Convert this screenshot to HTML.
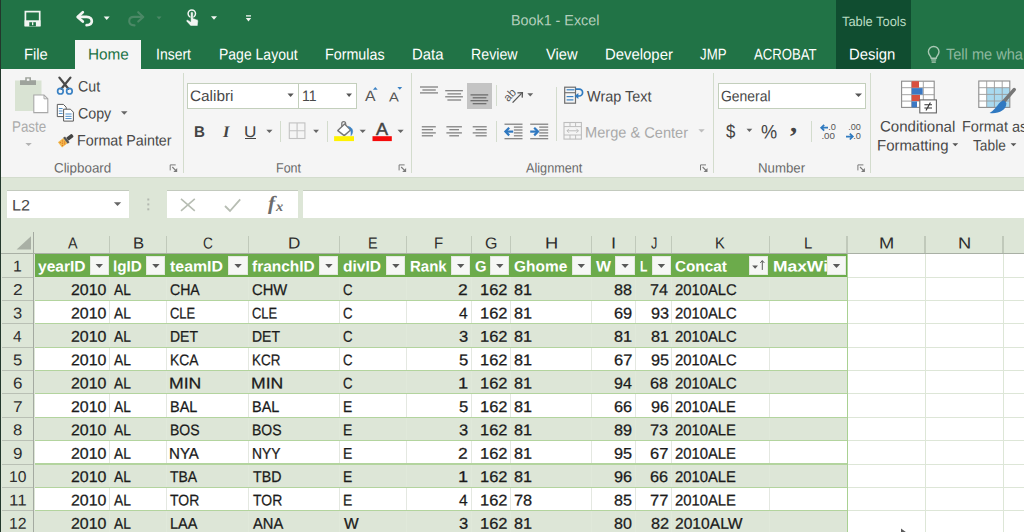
<!DOCTYPE html>
<html><head><meta charset="utf-8"><title>Book1 - Excel</title>
<style>
*{margin:0;padding:0;box-sizing:border-box}
html,body{width:1024px;height:532px;overflow:hidden;background:#fff}
body{font-family:"Liberation Sans",sans-serif;position:relative;color:#222}
.abs{position:absolute}
.t{position:absolute;white-space:nowrap;line-height:1;transform-origin:0 0}
svg{position:absolute;left:0;top:0}
</style></head><body>

<div class="abs" style="left:0px;top:0px;width:1024.00px;height:68.70px;background:#217346;"></div>
<div class="abs" style="left:835.7px;top:0px;width:75.00px;height:68.70px;background:#104d30;"></div>
<div class="abs" style="left:75.2px;top:40px;width:66.00px;height:29.00px;background:#f5f5f5;"></div>
<div class="t" style="left:510.55px;top:13px;font-size:14.8px;color:#b4cfbd;font-family:'Liberation Sans',sans-serif;transform:translateY(0.30px) scaleX(0.9686) rotate(0.03deg);">Book1 - Excel</div>
<div class="t" style="left:841.54px;top:14px;font-size:13.4px;color:#b9dcc3;font-family:'Liberation Sans',sans-serif;transform:translateY(0.90px) scaleX(0.9612) rotate(0.03deg);">Table Tools</div>
<div class="t" style="left:23.82px;top:46px;font-size:15.5px;color:#fff;font-family:'Liberation Sans',sans-serif;transform:translateY(0.60px) scaleX(0.9483) rotate(0.03deg);">File</div>
<div class="t" style="left:87.67px;top:46px;font-size:15.5px;color:#217346;font-family:'Liberation Sans',sans-serif;transform:translateY(0.60px) scaleX(0.9887) rotate(0.03deg);">Home</div>
<div class="t" style="left:155.54px;top:46px;font-size:15.5px;color:#fff;font-family:'Liberation Sans',sans-serif;transform:translateY(0.60px) scaleX(0.9013) rotate(0.03deg);">Insert</div>
<div class="t" style="left:218.78px;top:46px;font-size:15.5px;color:#fff;font-family:'Liberation Sans',sans-serif;transform:translateY(0.60px) scaleX(0.9030) rotate(0.03deg);">Page Layout</div>
<div class="t" style="left:324.86px;top:46px;font-size:15.5px;color:#fff;font-family:'Liberation Sans',sans-serif;transform:translateY(0.60px) scaleX(0.9228) rotate(0.03deg);">Formulas</div>
<div class="t" style="left:411.81px;top:46px;font-size:15.5px;color:#fff;font-family:'Liberation Sans',sans-serif;transform:translateY(0.60px) scaleX(0.9598) rotate(0.03deg);">Data</div>
<div class="t" style="left:471.17px;top:46px;font-size:15.5px;color:#fff;font-family:'Liberation Sans',sans-serif;transform:translateY(0.60px) scaleX(0.9153) rotate(0.03deg);">Review</div>
<div class="t" style="left:545.73px;top:46px;font-size:15.5px;color:#fff;font-family:'Liberation Sans',sans-serif;transform:translateY(0.60px) scaleX(0.9444) rotate(0.03deg);">View</div>
<div class="t" style="left:604.71px;top:46px;font-size:15.5px;color:#fff;font-family:'Liberation Sans',sans-serif;transform:translateY(0.60px) scaleX(0.9609) rotate(0.03deg);">Developer</div>
<div class="t" style="left:700.10px;top:46px;font-size:15.5px;color:#fff;font-family:'Liberation Sans',sans-serif;transform:translateY(0.60px) scaleX(0.8569) rotate(0.03deg);">JMP</div>
<div class="t" style="left:754.40px;top:46px;font-size:15.5px;color:#fff;font-family:'Liberation Sans',sans-serif;transform:translateY(0.60px) scaleX(0.8493) rotate(0.03deg);">ACROBAT</div>
<div class="t" style="left:848.81px;top:46px;font-size:15.5px;color:#fff;font-family:'Liberation Sans',sans-serif;transform:translateY(0.60px) scaleX(0.9601) rotate(0.03deg);">Design</div>
<div class="t" style="left:946.31px;top:46px;font-size:15.5px;color:#8fb9a0;font-family:'Liberation Sans',sans-serif;transform:translateY(0.50px) scaleX(0.9395) rotate(0.03deg);">Tell me wha</div>
<div class="abs" style="left:0px;top:68.7px;width:1024.00px;height:108.60px;background:#f5f5f5;"></div>
<div class="abs" style="left:182.6px;top:72.5px;width:1.20px;height:100.50px;background:#d3dccd;"></div>
<div class="abs" style="left:411.09999999999997px;top:72.5px;width:1.20px;height:100.50px;background:#d3dccd;"></div>
<div class="abs" style="left:712.8px;top:72.5px;width:1.20px;height:100.50px;background:#d3dccd;"></div>
<div class="abs" style="left:870.3px;top:72.5px;width:1.20px;height:100.50px;background:#d3dccd;"></div>
<div class="abs" style="left:279.7px;top:121px;width:1.00px;height:21.00px;background:#d3dccd;"></div>
<div class="abs" style="left:326.9px;top:121px;width:1.00px;height:21.00px;background:#d3dccd;"></div>
<div class="abs" style="left:496.0px;top:84.5px;width:1.00px;height:21.00px;background:#d3dccd;"></div>
<div class="abs" style="left:496.0px;top:120.6px;width:1.00px;height:21.70px;background:#d3dccd;"></div>
<div class="abs" style="left:555.6px;top:86.7px;width:1.00px;height:54.80px;background:#d3dccd;"></div>
<div class="abs" style="left:811.2px;top:120.5px;width:1.00px;height:21.50px;background:#d3dccd;"></div>
<div class="t" style="left:11.63px;top:118px;font-size:15.3px;color:#ababab;font-family:'Liberation Sans',sans-serif;transform:translateY(0.80px) scaleX(0.8750) rotate(0.03deg);">Paste</div>
<div class="t" style="left:77.69px;top:78px;font-size:15.1px;color:#484848;font-family:'Liberation Sans',sans-serif;transform:translateY(0.40px) scaleX(0.9404) rotate(0.03deg);">Cut</div>
<div class="t" style="left:77.69px;top:105px;font-size:15.1px;color:#484848;font-family:'Liberation Sans',sans-serif;transform:translateY(0.40px) scaleX(0.9419) rotate(0.03deg);">Copy</div>
<div class="t" style="left:77.26px;top:132px;font-size:15.1px;color:#484848;font-family:'Liberation Sans',sans-serif;transform:translateY(0.50px) scaleX(0.9477) rotate(0.03deg);">Format Painter</div>
<div class="t" style="left:53.83px;top:161px;font-size:13.6px;color:#6b6b6b;font-family:'Liberation Sans',sans-serif;transform:translateY(0.50px) scaleX(0.9839) rotate(0.03deg);">Clipboard</div>
<div class="t" style="left:275.50px;top:161px;font-size:13.6px;color:#6b6b6b;font-family:'Liberation Sans',sans-serif;transform:translateY(0.50px) scaleX(0.9215) rotate(0.03deg);">Font</div>
<div class="t" style="left:525.60px;top:161px;font-size:13.6px;color:#6b6b6b;font-family:'Liberation Sans',sans-serif;transform:translateY(0.50px) scaleX(0.9324) rotate(0.03deg);">Alignment</div>
<div class="t" style="left:758.44px;top:161px;font-size:13.6px;color:#6b6b6b;font-family:'Liberation Sans',sans-serif;transform:translateY(0.50px) scaleX(0.9740) rotate(0.03deg);">Number</div>
<div class="abs" style="left:187.3px;top:82.5px;width:111.50px;height:26.40px;background:#fff;border:1px solid #c3cfbc;"></div>
<div class="abs" style="left:297.8px;top:82.5px;width:58.90px;height:26.40px;background:#fff;border:1px solid #c3cfbc;"></div>
<div class="t" style="left:189.53px;top:88px;font-size:15.1px;color:#484848;font-family:'Liberation Sans',sans-serif;transform:translateY(0.10px) scaleX(1.0172) rotate(0.03deg);">Calibri</div>
<div class="t" style="left:301.64px;top:88px;font-size:15.1px;color:#484848;font-family:'Liberation Sans',sans-serif;transform:translateY(0.10px) scaleX(0.9337) rotate(0.03deg);">11</div>
<div class="abs" style="left:718.2px;top:82.5px;width:147.80px;height:26.20px;background:#fff;border:1px solid #c3cfbc;"></div>
<div class="t" style="left:721.10px;top:88px;font-size:15.1px;color:#484848;font-family:'Liberation Sans',sans-serif;transform:translateY(0.20px) scaleX(0.9241) rotate(0.03deg);">General</div>
<div class="t" style="left:586.53px;top:88px;font-size:15.1px;color:#484848;font-family:'Liberation Sans',sans-serif;transform:translateY(0.40px) scaleX(0.9584) rotate(0.03deg);">Wrap Text</div>
<div class="t" style="left:585.43px;top:124px;font-size:15.1px;color:#a9a9a9;font-family:'Liberation Sans',sans-serif;transform:translateY(0.60px) scaleX(0.9679) rotate(0.03deg);">Merge &amp; Center</div>
<div class="t" style="left:879.75px;top:118px;font-size:15.1px;color:#484848;font-family:'Liberation Sans',sans-serif;transform:translateY(0.60px) scaleX(0.9964) rotate(0.03deg);">Conditional</div>
<div class="t" style="left:876.60px;top:137px;font-size:15.1px;color:#484848;font-family:'Liberation Sans',sans-serif;transform:translateY(0.50px) scaleX(0.9905) rotate(0.03deg);">Formatting</div>
<div class="t" style="left:962.24px;top:118px;font-size:15.1px;color:#484848;font-family:'Liberation Sans',sans-serif;transform:translateY(0.60px) scaleX(0.9605) rotate(0.03deg);">Format as</div>
<div class="t" style="left:973.13px;top:137px;font-size:15.1px;color:#484848;font-family:'Liberation Sans',sans-serif;transform:translateY(0.50px) scaleX(0.9095) rotate(0.03deg);">Table</div>
<div class="abs" style="left:466.9px;top:82.6px;width:25.00px;height:26.20px;background:#c4c4c4;"></div>
<div class="t" style="left:193.72px;top:124px;font-size:15.5px;color:#444;font-family:'Liberation Sans',sans-serif;font-weight:bold;transform:translateY(0.10px) scaleX(0.9756) rotate(0.03deg);">B</div>
<div class="t" style="left:222.66px;top:124px;font-size:16px;color:#444;font-family:'Liberation Serif',serif;font-weight:bold;font-style:italic;transform:translateY(0.10px) scaleX(1.0174) rotate(0.03deg);">I</div>
<div class="t" style="left:244.21px;top:124px;font-size:15.5px;color:#444;font-family:'Liberation Sans',sans-serif;transform:translateY(0.10px) scaleX(1.1092) rotate(0.03deg);">U</div>
<div class="abs" style="left:245px;top:138.2px;width:11.00px;height:1.30px;background:#444;"></div>
<div class="t" style="left:365.00px;top:88px;font-size:15px;color:#555;font-family:'Liberation Sans',sans-serif;transform:translateY(0.10px) scaleX(1.0526) rotate(0.03deg);">A</div>
<div class="t" style="left:389.40px;top:90px;font-size:13px;color:#555;font-family:'Liberation Sans',sans-serif;transform:translateY(0.60px) scaleX(1.1336) rotate(0.03deg);">A</div>
<div class="t" style="left:376.00px;top:121px;font-size:17.6px;color:#444;font-family:'Liberation Sans',sans-serif;transform:translateY(0.10px) scaleX(1.0253) rotate(0.03deg);-webkit-text-stroke:0.5px #444;">A</div>
<div class="t" style="left:726.03px;top:121px;font-size:19px;color:#444;font-family:'Liberation Sans',sans-serif;transform:translateY(0.70px) scaleX(0.8838) rotate(0.03deg);">$</div>
<div class="t" style="left:760.66px;top:122px;font-size:19.5px;color:#444;font-family:'Liberation Sans',sans-serif;transform:translateY(0.50px) scaleX(0.9318) rotate(0.03deg);">%</div>
<div class="t" style="left:790.31px;top:109px;font-size:27px;color:#444;font-family:'Liberation Serif',serif;font-weight:bold;transform:translateY(0.70px) scaleX(1.0659) rotate(0.03deg);">,</div>
<div class="abs" style="left:0px;top:176.8px;width:1024.00px;height:77.20px;background:#dde6d7;"></div>
<div class="abs" style="left:0px;top:176.6px;width:1024.00px;height:0.80px;background:#d3dccd;"></div>
<div class="abs" style="left:6.6px;top:190.2px;width:122.40px;height:28.00px;background:#fff;border-top:1px solid #c3cabe;"></div>
<div class="abs" style="left:166.6px;top:190.2px;width:131.60px;height:28.00px;background:#fff;border-top:1px solid #c3cabe;"></div>
<div class="abs" style="left:303.2px;top:190.2px;width:720.80px;height:28.00px;background:#fff;border-top:1px solid #c3cabe;"></div>
<div class="t" style="left:12.00px;top:197px;font-size:15.2px;color:#484848;font-family:'Liberation Sans',sans-serif;transform:translateY(0.60px) scaleX(1.0674) rotate(0.03deg);">L2</div>
<div class="t" style="left:268.20px;top:192px;font-size:20px;color:#6c6c6c;font-family:'Liberation Serif',serif;font-weight:bold;font-style:italic;transform:translateY(0.70px) scaleX(1.0602) rotate(0.03deg);">f</div>
<div class="t" style="left:276.21px;top:199px;font-size:14px;color:#6c6c6c;font-family:'Liberation Serif',serif;font-weight:bold;font-style:italic;transform:translateY(0.90px) scaleX(1.0204) rotate(0.03deg);">x</div>
<div class="abs" style="left:0px;top:254px;width:34.50px;height:278.00px;background:#dde6d7;"></div>
<div class="abs" style="left:847px;top:276.5px;width:177.00px;height:1.00px;background:#dde6d7;"></div>
<div class="abs" style="left:847px;top:299.88px;width:177.00px;height:1.00px;background:#dde6d7;"></div>
<div class="abs" style="left:847px;top:323.26px;width:177.00px;height:1.00px;background:#dde6d7;"></div>
<div class="abs" style="left:847px;top:346.64px;width:177.00px;height:1.00px;background:#dde6d7;"></div>
<div class="abs" style="left:847px;top:370.02px;width:177.00px;height:1.00px;background:#dde6d7;"></div>
<div class="abs" style="left:847px;top:393.4px;width:177.00px;height:1.00px;background:#dde6d7;"></div>
<div class="abs" style="left:847px;top:416.78px;width:177.00px;height:1.00px;background:#dde6d7;"></div>
<div class="abs" style="left:847px;top:440.15999999999997px;width:177.00px;height:1.00px;background:#dde6d7;"></div>
<div class="abs" style="left:847px;top:463.53999999999996px;width:177.00px;height:1.00px;background:#dde6d7;"></div>
<div class="abs" style="left:847px;top:486.91999999999996px;width:177.00px;height:1.00px;background:#dde6d7;"></div>
<div class="abs" style="left:847px;top:510.3px;width:177.00px;height:1.00px;background:#dde6d7;"></div>
<div class="abs" style="left:847px;top:533.6800000000001px;width:177.00px;height:1.00px;background:#dde6d7;"></div>
<div class="abs" style="left:924.5px;top:254px;width:1.00px;height:278.00px;background:#dde6d7;"></div>
<div class="abs" style="left:1002.5px;top:254px;width:1.00px;height:278.00px;background:#dde6d7;"></div>
<div class="abs" style="left:34.5px;top:253.62px;width:812.50px;height:23.38px;background:#6cab4b;"></div>
<div class="abs" style="left:34.5px;top:277.0px;width:812.50px;height:23.38px;background:#dde6d7;"></div>
<div class="abs" style="left:109.3px;top:277.0px;width:1.00px;height:23.38px;background:#e0e9da;"></div>
<div class="abs" style="left:165.9px;top:277.0px;width:1.00px;height:23.38px;background:#e0e9da;"></div>
<div class="abs" style="left:248.1px;top:277.0px;width:1.00px;height:23.38px;background:#e0e9da;"></div>
<div class="abs" style="left:338.9px;top:277.0px;width:1.00px;height:23.38px;background:#e0e9da;"></div>
<div class="abs" style="left:405.9px;top:277.0px;width:1.00px;height:23.38px;background:#e0e9da;"></div>
<div class="abs" style="left:470.7px;top:277.0px;width:1.00px;height:23.38px;background:#e0e9da;"></div>
<div class="abs" style="left:509.8px;top:277.0px;width:1.00px;height:23.38px;background:#e0e9da;"></div>
<div class="abs" style="left:591.3px;top:277.0px;width:1.00px;height:23.38px;background:#e0e9da;"></div>
<div class="abs" style="left:635.1px;top:277.0px;width:1.00px;height:23.38px;background:#e0e9da;"></div>
<div class="abs" style="left:671.4px;top:277.0px;width:1.00px;height:23.38px;background:#e0e9da;"></div>
<div class="abs" style="left:768.7px;top:277.0px;width:1.00px;height:23.38px;background:#e0e9da;"></div>
<div class="abs" style="left:109.3px;top:300.38px;width:1.00px;height:23.38px;background:#e4e8e1;"></div>
<div class="abs" style="left:165.9px;top:300.38px;width:1.00px;height:23.38px;background:#e4e8e1;"></div>
<div class="abs" style="left:248.1px;top:300.38px;width:1.00px;height:23.38px;background:#e4e8e1;"></div>
<div class="abs" style="left:338.9px;top:300.38px;width:1.00px;height:23.38px;background:#e4e8e1;"></div>
<div class="abs" style="left:405.9px;top:300.38px;width:1.00px;height:23.38px;background:#e4e8e1;"></div>
<div class="abs" style="left:470.7px;top:300.38px;width:1.00px;height:23.38px;background:#e4e8e1;"></div>
<div class="abs" style="left:509.8px;top:300.38px;width:1.00px;height:23.38px;background:#e4e8e1;"></div>
<div class="abs" style="left:591.3px;top:300.38px;width:1.00px;height:23.38px;background:#e4e8e1;"></div>
<div class="abs" style="left:635.1px;top:300.38px;width:1.00px;height:23.38px;background:#e4e8e1;"></div>
<div class="abs" style="left:671.4px;top:300.38px;width:1.00px;height:23.38px;background:#e4e8e1;"></div>
<div class="abs" style="left:768.7px;top:300.38px;width:1.00px;height:23.38px;background:#e4e8e1;"></div>
<div class="abs" style="left:34.5px;top:323.76px;width:812.50px;height:23.38px;background:#dde6d7;"></div>
<div class="abs" style="left:109.3px;top:323.76px;width:1.00px;height:23.38px;background:#e0e9da;"></div>
<div class="abs" style="left:165.9px;top:323.76px;width:1.00px;height:23.38px;background:#e0e9da;"></div>
<div class="abs" style="left:248.1px;top:323.76px;width:1.00px;height:23.38px;background:#e0e9da;"></div>
<div class="abs" style="left:338.9px;top:323.76px;width:1.00px;height:23.38px;background:#e0e9da;"></div>
<div class="abs" style="left:405.9px;top:323.76px;width:1.00px;height:23.38px;background:#e0e9da;"></div>
<div class="abs" style="left:470.7px;top:323.76px;width:1.00px;height:23.38px;background:#e0e9da;"></div>
<div class="abs" style="left:509.8px;top:323.76px;width:1.00px;height:23.38px;background:#e0e9da;"></div>
<div class="abs" style="left:591.3px;top:323.76px;width:1.00px;height:23.38px;background:#e0e9da;"></div>
<div class="abs" style="left:635.1px;top:323.76px;width:1.00px;height:23.38px;background:#e0e9da;"></div>
<div class="abs" style="left:671.4px;top:323.76px;width:1.00px;height:23.38px;background:#e0e9da;"></div>
<div class="abs" style="left:768.7px;top:323.76px;width:1.00px;height:23.38px;background:#e0e9da;"></div>
<div class="abs" style="left:109.3px;top:347.14px;width:1.00px;height:23.38px;background:#e4e8e1;"></div>
<div class="abs" style="left:165.9px;top:347.14px;width:1.00px;height:23.38px;background:#e4e8e1;"></div>
<div class="abs" style="left:248.1px;top:347.14px;width:1.00px;height:23.38px;background:#e4e8e1;"></div>
<div class="abs" style="left:338.9px;top:347.14px;width:1.00px;height:23.38px;background:#e4e8e1;"></div>
<div class="abs" style="left:405.9px;top:347.14px;width:1.00px;height:23.38px;background:#e4e8e1;"></div>
<div class="abs" style="left:470.7px;top:347.14px;width:1.00px;height:23.38px;background:#e4e8e1;"></div>
<div class="abs" style="left:509.8px;top:347.14px;width:1.00px;height:23.38px;background:#e4e8e1;"></div>
<div class="abs" style="left:591.3px;top:347.14px;width:1.00px;height:23.38px;background:#e4e8e1;"></div>
<div class="abs" style="left:635.1px;top:347.14px;width:1.00px;height:23.38px;background:#e4e8e1;"></div>
<div class="abs" style="left:671.4px;top:347.14px;width:1.00px;height:23.38px;background:#e4e8e1;"></div>
<div class="abs" style="left:768.7px;top:347.14px;width:1.00px;height:23.38px;background:#e4e8e1;"></div>
<div class="abs" style="left:34.5px;top:370.52px;width:812.50px;height:23.38px;background:#dde6d7;"></div>
<div class="abs" style="left:109.3px;top:370.52px;width:1.00px;height:23.38px;background:#e0e9da;"></div>
<div class="abs" style="left:165.9px;top:370.52px;width:1.00px;height:23.38px;background:#e0e9da;"></div>
<div class="abs" style="left:248.1px;top:370.52px;width:1.00px;height:23.38px;background:#e0e9da;"></div>
<div class="abs" style="left:338.9px;top:370.52px;width:1.00px;height:23.38px;background:#e0e9da;"></div>
<div class="abs" style="left:405.9px;top:370.52px;width:1.00px;height:23.38px;background:#e0e9da;"></div>
<div class="abs" style="left:470.7px;top:370.52px;width:1.00px;height:23.38px;background:#e0e9da;"></div>
<div class="abs" style="left:509.8px;top:370.52px;width:1.00px;height:23.38px;background:#e0e9da;"></div>
<div class="abs" style="left:591.3px;top:370.52px;width:1.00px;height:23.38px;background:#e0e9da;"></div>
<div class="abs" style="left:635.1px;top:370.52px;width:1.00px;height:23.38px;background:#e0e9da;"></div>
<div class="abs" style="left:671.4px;top:370.52px;width:1.00px;height:23.38px;background:#e0e9da;"></div>
<div class="abs" style="left:768.7px;top:370.52px;width:1.00px;height:23.38px;background:#e0e9da;"></div>
<div class="abs" style="left:109.3px;top:393.9px;width:1.00px;height:23.38px;background:#e4e8e1;"></div>
<div class="abs" style="left:165.9px;top:393.9px;width:1.00px;height:23.38px;background:#e4e8e1;"></div>
<div class="abs" style="left:248.1px;top:393.9px;width:1.00px;height:23.38px;background:#e4e8e1;"></div>
<div class="abs" style="left:338.9px;top:393.9px;width:1.00px;height:23.38px;background:#e4e8e1;"></div>
<div class="abs" style="left:405.9px;top:393.9px;width:1.00px;height:23.38px;background:#e4e8e1;"></div>
<div class="abs" style="left:470.7px;top:393.9px;width:1.00px;height:23.38px;background:#e4e8e1;"></div>
<div class="abs" style="left:509.8px;top:393.9px;width:1.00px;height:23.38px;background:#e4e8e1;"></div>
<div class="abs" style="left:591.3px;top:393.9px;width:1.00px;height:23.38px;background:#e4e8e1;"></div>
<div class="abs" style="left:635.1px;top:393.9px;width:1.00px;height:23.38px;background:#e4e8e1;"></div>
<div class="abs" style="left:671.4px;top:393.9px;width:1.00px;height:23.38px;background:#e4e8e1;"></div>
<div class="abs" style="left:768.7px;top:393.9px;width:1.00px;height:23.38px;background:#e4e8e1;"></div>
<div class="abs" style="left:34.5px;top:417.28px;width:812.50px;height:23.38px;background:#dde6d7;"></div>
<div class="abs" style="left:109.3px;top:417.28px;width:1.00px;height:23.38px;background:#e0e9da;"></div>
<div class="abs" style="left:165.9px;top:417.28px;width:1.00px;height:23.38px;background:#e0e9da;"></div>
<div class="abs" style="left:248.1px;top:417.28px;width:1.00px;height:23.38px;background:#e0e9da;"></div>
<div class="abs" style="left:338.9px;top:417.28px;width:1.00px;height:23.38px;background:#e0e9da;"></div>
<div class="abs" style="left:405.9px;top:417.28px;width:1.00px;height:23.38px;background:#e0e9da;"></div>
<div class="abs" style="left:470.7px;top:417.28px;width:1.00px;height:23.38px;background:#e0e9da;"></div>
<div class="abs" style="left:509.8px;top:417.28px;width:1.00px;height:23.38px;background:#e0e9da;"></div>
<div class="abs" style="left:591.3px;top:417.28px;width:1.00px;height:23.38px;background:#e0e9da;"></div>
<div class="abs" style="left:635.1px;top:417.28px;width:1.00px;height:23.38px;background:#e0e9da;"></div>
<div class="abs" style="left:671.4px;top:417.28px;width:1.00px;height:23.38px;background:#e0e9da;"></div>
<div class="abs" style="left:768.7px;top:417.28px;width:1.00px;height:23.38px;background:#e0e9da;"></div>
<div class="abs" style="left:109.3px;top:440.65999999999997px;width:1.00px;height:23.38px;background:#e4e8e1;"></div>
<div class="abs" style="left:165.9px;top:440.65999999999997px;width:1.00px;height:23.38px;background:#e4e8e1;"></div>
<div class="abs" style="left:248.1px;top:440.65999999999997px;width:1.00px;height:23.38px;background:#e4e8e1;"></div>
<div class="abs" style="left:338.9px;top:440.65999999999997px;width:1.00px;height:23.38px;background:#e4e8e1;"></div>
<div class="abs" style="left:405.9px;top:440.65999999999997px;width:1.00px;height:23.38px;background:#e4e8e1;"></div>
<div class="abs" style="left:470.7px;top:440.65999999999997px;width:1.00px;height:23.38px;background:#e4e8e1;"></div>
<div class="abs" style="left:509.8px;top:440.65999999999997px;width:1.00px;height:23.38px;background:#e4e8e1;"></div>
<div class="abs" style="left:591.3px;top:440.65999999999997px;width:1.00px;height:23.38px;background:#e4e8e1;"></div>
<div class="abs" style="left:635.1px;top:440.65999999999997px;width:1.00px;height:23.38px;background:#e4e8e1;"></div>
<div class="abs" style="left:671.4px;top:440.65999999999997px;width:1.00px;height:23.38px;background:#e4e8e1;"></div>
<div class="abs" style="left:768.7px;top:440.65999999999997px;width:1.00px;height:23.38px;background:#e4e8e1;"></div>
<div class="abs" style="left:34.5px;top:464.03999999999996px;width:812.50px;height:23.38px;background:#dde6d7;"></div>
<div class="abs" style="left:109.3px;top:464.03999999999996px;width:1.00px;height:23.38px;background:#e0e9da;"></div>
<div class="abs" style="left:165.9px;top:464.03999999999996px;width:1.00px;height:23.38px;background:#e0e9da;"></div>
<div class="abs" style="left:248.1px;top:464.03999999999996px;width:1.00px;height:23.38px;background:#e0e9da;"></div>
<div class="abs" style="left:338.9px;top:464.03999999999996px;width:1.00px;height:23.38px;background:#e0e9da;"></div>
<div class="abs" style="left:405.9px;top:464.03999999999996px;width:1.00px;height:23.38px;background:#e0e9da;"></div>
<div class="abs" style="left:470.7px;top:464.03999999999996px;width:1.00px;height:23.38px;background:#e0e9da;"></div>
<div class="abs" style="left:509.8px;top:464.03999999999996px;width:1.00px;height:23.38px;background:#e0e9da;"></div>
<div class="abs" style="left:591.3px;top:464.03999999999996px;width:1.00px;height:23.38px;background:#e0e9da;"></div>
<div class="abs" style="left:635.1px;top:464.03999999999996px;width:1.00px;height:23.38px;background:#e0e9da;"></div>
<div class="abs" style="left:671.4px;top:464.03999999999996px;width:1.00px;height:23.38px;background:#e0e9da;"></div>
<div class="abs" style="left:768.7px;top:464.03999999999996px;width:1.00px;height:23.38px;background:#e0e9da;"></div>
<div class="abs" style="left:109.3px;top:487.41999999999996px;width:1.00px;height:23.38px;background:#e4e8e1;"></div>
<div class="abs" style="left:165.9px;top:487.41999999999996px;width:1.00px;height:23.38px;background:#e4e8e1;"></div>
<div class="abs" style="left:248.1px;top:487.41999999999996px;width:1.00px;height:23.38px;background:#e4e8e1;"></div>
<div class="abs" style="left:338.9px;top:487.41999999999996px;width:1.00px;height:23.38px;background:#e4e8e1;"></div>
<div class="abs" style="left:405.9px;top:487.41999999999996px;width:1.00px;height:23.38px;background:#e4e8e1;"></div>
<div class="abs" style="left:470.7px;top:487.41999999999996px;width:1.00px;height:23.38px;background:#e4e8e1;"></div>
<div class="abs" style="left:509.8px;top:487.41999999999996px;width:1.00px;height:23.38px;background:#e4e8e1;"></div>
<div class="abs" style="left:591.3px;top:487.41999999999996px;width:1.00px;height:23.38px;background:#e4e8e1;"></div>
<div class="abs" style="left:635.1px;top:487.41999999999996px;width:1.00px;height:23.38px;background:#e4e8e1;"></div>
<div class="abs" style="left:671.4px;top:487.41999999999996px;width:1.00px;height:23.38px;background:#e4e8e1;"></div>
<div class="abs" style="left:768.7px;top:487.41999999999996px;width:1.00px;height:23.38px;background:#e4e8e1;"></div>
<div class="abs" style="left:34.5px;top:510.8px;width:812.50px;height:23.38px;background:#dde6d7;"></div>
<div class="abs" style="left:109.3px;top:510.8px;width:1.00px;height:23.38px;background:#e0e9da;"></div>
<div class="abs" style="left:165.9px;top:510.8px;width:1.00px;height:23.38px;background:#e0e9da;"></div>
<div class="abs" style="left:248.1px;top:510.8px;width:1.00px;height:23.38px;background:#e0e9da;"></div>
<div class="abs" style="left:338.9px;top:510.8px;width:1.00px;height:23.38px;background:#e0e9da;"></div>
<div class="abs" style="left:405.9px;top:510.8px;width:1.00px;height:23.38px;background:#e0e9da;"></div>
<div class="abs" style="left:470.7px;top:510.8px;width:1.00px;height:23.38px;background:#e0e9da;"></div>
<div class="abs" style="left:509.8px;top:510.8px;width:1.00px;height:23.38px;background:#e0e9da;"></div>
<div class="abs" style="left:591.3px;top:510.8px;width:1.00px;height:23.38px;background:#e0e9da;"></div>
<div class="abs" style="left:635.1px;top:510.8px;width:1.00px;height:23.38px;background:#e0e9da;"></div>
<div class="abs" style="left:671.4px;top:510.8px;width:1.00px;height:23.38px;background:#e0e9da;"></div>
<div class="abs" style="left:768.7px;top:510.8px;width:1.00px;height:23.38px;background:#e0e9da;"></div>
<div class="abs" style="left:34.5px;top:299.78px;width:813.00px;height:1.20px;background:#b3d49e;"></div>
<div class="abs" style="left:34.5px;top:323.15999999999997px;width:813.00px;height:1.20px;background:#b3d49e;"></div>
<div class="abs" style="left:34.5px;top:346.53999999999996px;width:813.00px;height:1.20px;background:#b3d49e;"></div>
<div class="abs" style="left:34.5px;top:369.91999999999996px;width:813.00px;height:1.20px;background:#b3d49e;"></div>
<div class="abs" style="left:34.5px;top:393.29999999999995px;width:813.00px;height:1.20px;background:#b3d49e;"></div>
<div class="abs" style="left:34.5px;top:416.67999999999995px;width:813.00px;height:1.20px;background:#b3d49e;"></div>
<div class="abs" style="left:34.5px;top:440.05999999999995px;width:813.00px;height:1.20px;background:#b3d49e;"></div>
<div class="abs" style="left:34.5px;top:463.43999999999994px;width:813.00px;height:1.20px;background:#b3d49e;"></div>
<div class="abs" style="left:34.5px;top:486.81999999999994px;width:813.00px;height:1.20px;background:#b3d49e;"></div>
<div class="abs" style="left:34.5px;top:510.2px;width:813.00px;height:1.20px;background:#b3d49e;"></div>
<div class="abs" style="left:34.5px;top:533.58px;width:813.00px;height:1.20px;background:#b3d49e;"></div>
<div class="abs" style="left:846.5px;top:253.62px;width:1.10px;height:278.38px;background:#a9d192;"></div>
<div class="abs" style="left:2px;top:276.5px;width:32.00px;height:1.00px;background:#b9c0b4;"></div>
<div class="abs" style="left:2px;top:299.88px;width:32.00px;height:1.00px;background:#b9c0b4;"></div>
<div class="abs" style="left:2px;top:323.26px;width:32.00px;height:1.00px;background:#b9c0b4;"></div>
<div class="abs" style="left:2px;top:346.64px;width:32.00px;height:1.00px;background:#b9c0b4;"></div>
<div class="abs" style="left:2px;top:370.02px;width:32.00px;height:1.00px;background:#b9c0b4;"></div>
<div class="abs" style="left:2px;top:393.4px;width:32.00px;height:1.00px;background:#b9c0b4;"></div>
<div class="abs" style="left:2px;top:416.78px;width:32.00px;height:1.00px;background:#b9c0b4;"></div>
<div class="abs" style="left:2px;top:440.15999999999997px;width:32.00px;height:1.00px;background:#b9c0b4;"></div>
<div class="abs" style="left:2px;top:463.53999999999996px;width:32.00px;height:1.00px;background:#b9c0b4;"></div>
<div class="abs" style="left:2px;top:486.91999999999996px;width:32.00px;height:1.00px;background:#b9c0b4;"></div>
<div class="abs" style="left:2px;top:510.3px;width:32.00px;height:1.00px;background:#b9c0b4;"></div>
<div class="abs" style="left:2px;top:533.6800000000001px;width:32.00px;height:1.00px;background:#b9c0b4;"></div>
<div class="abs" style="left:33.1px;top:232px;width:1.20px;height:300.00px;background:#a4aaa1;"></div>
<div class="abs" style="left:0px;top:252.7px;width:1024.00px;height:1.20px;background:#a9b0a5;"></div>
<div class="abs" style="left:109.2px;top:236px;width:1.20px;height:16.70px;background:#c0c9ba;"></div>
<div class="abs" style="left:165.8px;top:236px;width:1.20px;height:16.70px;background:#c0c9ba;"></div>
<div class="abs" style="left:248.0px;top:236px;width:1.20px;height:16.70px;background:#c0c9ba;"></div>
<div class="abs" style="left:338.79999999999995px;top:236px;width:1.20px;height:16.70px;background:#c0c9ba;"></div>
<div class="abs" style="left:405.79999999999995px;top:236px;width:1.20px;height:16.70px;background:#c0c9ba;"></div>
<div class="abs" style="left:470.59999999999997px;top:236px;width:1.20px;height:16.70px;background:#c0c9ba;"></div>
<div class="abs" style="left:509.7px;top:236px;width:1.20px;height:16.70px;background:#c0c9ba;"></div>
<div class="abs" style="left:591.1999999999999px;top:236px;width:1.20px;height:16.70px;background:#c0c9ba;"></div>
<div class="abs" style="left:635.0px;top:236px;width:1.20px;height:16.70px;background:#c0c9ba;"></div>
<div class="abs" style="left:671.3px;top:236px;width:1.20px;height:16.70px;background:#c0c9ba;"></div>
<div class="abs" style="left:768.6px;top:236px;width:1.20px;height:16.70px;background:#c0c9ba;"></div>
<div class="abs" style="left:846.4px;top:236px;width:1.20px;height:16.70px;background:#c0c9ba;"></div>
<div class="abs" style="left:924.4px;top:236px;width:1.20px;height:16.70px;background:#c0c9ba;"></div>
<div class="abs" style="left:1002.4px;top:236px;width:1.20px;height:16.70px;background:#c0c9ba;"></div>
<div class="t" style="left:67.58px;top:235px;font-size:15.9px;color:#2e2e2e;font-family:'Liberation Sans',sans-serif;transform:translateY(0.50px) scaleX(0.9020) rotate(0.03deg);">A</div>
<div class="t" style="left:132.52px;top:235px;font-size:15.9px;color:#2e2e2e;font-family:'Liberation Sans',sans-serif;transform:translateY(0.50px) scaleX(1.0464) rotate(0.03deg);">B</div>
<div class="t" style="left:202.66px;top:235px;font-size:15.9px;color:#2e2e2e;font-family:'Liberation Sans',sans-serif;transform:translateY(0.50px) scaleX(0.8617) rotate(0.03deg);">C</div>
<div class="t" style="left:287.73px;top:235px;font-size:15.9px;color:#2e2e2e;font-family:'Liberation Sans',sans-serif;transform:translateY(0.50px) scaleX(1.0774) rotate(0.03deg);">D</div>
<div class="t" style="left:368.00px;top:235px;font-size:15.9px;color:#2e2e2e;font-family:'Liberation Sans',sans-serif;transform:translateY(0.50px) scaleX(0.9095) rotate(0.03deg);">E</div>
<div class="t" style="left:434.12px;top:235px;font-size:15.9px;color:#2e2e2e;font-family:'Liberation Sans',sans-serif;transform:translateY(0.50px) scaleX(0.9439) rotate(0.03deg);">F</div>
<div class="t" style="left:484.91px;top:235px;font-size:15.9px;color:#2e2e2e;font-family:'Liberation Sans',sans-serif;transform:translateY(0.50px) scaleX(1.0067) rotate(0.03deg);">G</div>
<div class="t" style="left:544.67px;top:235px;font-size:15.9px;color:#2e2e2e;font-family:'Liberation Sans',sans-serif;transform:translateY(0.50px) scaleX(1.1500) rotate(0.03deg);">H</div>
<div class="t" style="left:611.39px;top:235px;font-size:15.9px;color:#2e2e2e;font-family:'Liberation Sans',sans-serif;transform:translateY(0.50px) scaleX(1.1500) rotate(0.03deg);">I</div>
<div class="t" style="left:651.15px;top:235px;font-size:15.9px;color:#2e2e2e;font-family:'Liberation Sans',sans-serif;transform:translateY(0.50px) scaleX(0.8000) rotate(0.03deg);">J</div>
<div class="t" style="left:715.34px;top:235px;font-size:15.9px;color:#2e2e2e;font-family:'Liberation Sans',sans-serif;transform:translateY(0.50px) scaleX(0.9258) rotate(0.03deg);">K</div>
<div class="t" style="left:803.78px;top:235px;font-size:15.9px;color:#2e2e2e;font-family:'Liberation Sans',sans-serif;transform:translateY(0.50px) scaleX(0.9390) rotate(0.03deg);">L</div>
<div class="t" style="left:878.61px;top:235px;font-size:15.9px;color:#2e2e2e;font-family:'Liberation Sans',sans-serif;transform:translateY(0.50px) scaleX(1.1500) rotate(0.03deg);">M</div>
<div class="t" style="left:957.62px;top:235px;font-size:15.9px;color:#2e2e2e;font-family:'Liberation Sans',sans-serif;transform:translateY(0.50px) scaleX(1.1500) rotate(0.03deg);">N</div>
<div class="t" style="left:1035.95px;top:235px;font-size:15.9px;color:#2e2e2e;font-family:'Liberation Sans',sans-serif;transform:translateY(0.50px) scaleX(1.0144) rotate(0.03deg);">O</div>
<div class="t" style="left:12.95px;top:258px;font-size:15.7px;color:#2e2e2e;font-family:'Liberation Sans',sans-serif;transform:translateY(0.62px) scaleX(1.0133) rotate(0.03deg);">1</div>
<div class="t" style="left:12.77px;top:282px;font-size:15.7px;color:#2e2e2e;font-family:'Liberation Sans',sans-serif;transform:translateY(0.00px) scaleX(1.1088) rotate(0.03deg);">2</div>
<div class="t" style="left:13.06px;top:305px;font-size:15.7px;color:#2e2e2e;font-family:'Liberation Sans',sans-serif;transform:translateY(0.38px) scaleX(1.0510) rotate(0.03deg);">3</div>
<div class="t" style="left:13.33px;top:328px;font-size:15.7px;color:#2e2e2e;font-family:'Liberation Sans',sans-serif;transform:translateY(0.76px) scaleX(0.9892) rotate(0.03deg);">4</div>
<div class="t" style="left:12.97px;top:352px;font-size:15.7px;color:#2e2e2e;font-family:'Liberation Sans',sans-serif;transform:translateY(0.14px) scaleX(1.0621) rotate(0.03deg);">5</div>
<div class="t" style="left:12.79px;top:375px;font-size:15.7px;color:#2e2e2e;font-family:'Liberation Sans',sans-serif;transform:translateY(0.52px) scaleX(1.0849) rotate(0.03deg);">6</div>
<div class="t" style="left:12.77px;top:398px;font-size:15.7px;color:#2e2e2e;font-family:'Liberation Sans',sans-serif;transform:translateY(0.90px) scaleX(1.1088) rotate(0.03deg);">7</div>
<div class="t" style="left:12.97px;top:422px;font-size:15.7px;color:#2e2e2e;font-family:'Liberation Sans',sans-serif;transform:translateY(0.28px) scaleX(1.0621) rotate(0.03deg);">8</div>
<div class="t" style="left:12.87px;top:445px;font-size:15.7px;color:#2e2e2e;font-family:'Liberation Sans',sans-serif;transform:translateY(0.66px) scaleX(1.0849) rotate(0.03deg);">9</div>
<div class="t" style="left:8.61px;top:469px;font-size:15.7px;color:#2e2e2e;font-family:'Liberation Sans',sans-serif;transform:translateY(0.04px) scaleX(0.9962) rotate(0.03deg);">10</div>
<div class="t" style="left:8.50px;top:492px;font-size:15.7px;color:#2e2e2e;font-family:'Liberation Sans',sans-serif;transform:translateY(0.42px) scaleX(1.0888) rotate(0.03deg);">11</div>
<div class="t" style="left:8.59px;top:515px;font-size:15.7px;color:#2e2e2e;font-family:'Liberation Sans',sans-serif;transform:translateY(0.80px) scaleX(1.0114) rotate(0.03deg);">12</div>
<div class="t" style="left:37.72px;top:258px;font-size:15.2px;color:#fff;font-family:'Liberation Sans',sans-serif;font-weight:bold;transform:translateY(0.52px) scaleX(1.0251) rotate(0.03deg);">yearID</div>
<div class="abs" style="left:89.6px;top:255.82px;width:19.30px;height:19.00px;background:#f6f7f5;border:1px solid #e3e9df;"></div>
<div class="t" style="left:112.73px;top:258px;font-size:15.2px;color:#fff;font-family:'Liberation Sans',sans-serif;font-weight:bold;transform:translateY(0.52px) scaleX(1.0044) rotate(0.03deg);">lgID</div>
<div class="abs" style="left:146.20000000000002px;top:255.82px;width:19.30px;height:19.00px;background:#f6f7f5;border:1px solid #e3e9df;"></div>
<div class="t" style="left:170.44px;top:258px;font-size:15.2px;color:#fff;font-family:'Liberation Sans',sans-serif;font-weight:bold;transform:translateY(0.52px) scaleX(1.0470) rotate(0.03deg);">teamID</div>
<div class="abs" style="left:228.4px;top:255.82px;width:19.30px;height:19.00px;background:#f6f7f5;border:1px solid #e3e9df;"></div>
<div class="t" style="left:252.27px;top:258px;font-size:15.2px;color:#fff;font-family:'Liberation Sans',sans-serif;font-weight:bold;transform:translateY(0.52px) scaleX(1.0181) rotate(0.03deg);">franchID</div>
<div class="abs" style="left:319.2px;top:255.82px;width:19.30px;height:19.00px;background:#f6f7f5;border:1px solid #e3e9df;"></div>
<div class="t" style="left:343.48px;top:258px;font-size:15.2px;color:#fff;font-family:'Liberation Sans',sans-serif;font-weight:bold;transform:translateY(0.52px) scaleX(1.0237) rotate(0.03deg);">divID</div>
<div class="abs" style="left:386.2px;top:255.82px;width:19.30px;height:19.00px;background:#f6f7f5;border:1px solid #e3e9df;"></div>
<div class="t" style="left:409.62px;top:258px;font-size:15.2px;color:#fff;font-family:'Liberation Sans',sans-serif;font-weight:bold;transform:translateY(0.52px) scaleX(0.9868) rotate(0.03deg);">Rank</div>
<div class="abs" style="left:451.0px;top:255.82px;width:19.30px;height:19.00px;background:#f6f7f5;border:1px solid #e3e9df;"></div>
<div class="t" style="left:474.71px;top:258px;font-size:15.2px;color:#fff;font-family:'Liberation Sans',sans-serif;font-weight:bold;transform:translateY(0.52px) scaleX(0.9747) rotate(0.03deg);">G</div>
<div class="abs" style="left:490.1px;top:255.82px;width:19.30px;height:19.00px;background:#f6f7f5;border:1px solid #e3e9df;"></div>
<div class="t" style="left:513.78px;top:258px;font-size:15.2px;color:#fff;font-family:'Liberation Sans',sans-serif;font-weight:bold;transform:translateY(0.52px) scaleX(1.0175) rotate(0.03deg);">Ghome</div>
<div class="abs" style="left:571.5999999999999px;top:255.82px;width:19.30px;height:19.00px;background:#f6f7f5;border:1px solid #e3e9df;"></div>
<div class="t" style="left:595.60px;top:258px;font-size:15.2px;color:#fff;font-family:'Liberation Sans',sans-serif;font-weight:bold;transform:translateY(0.52px) scaleX(1.0443) rotate(0.03deg);">W</div>
<div class="abs" style="left:615.4px;top:255.82px;width:19.30px;height:19.00px;background:#f6f7f5;border:1px solid #e3e9df;"></div>
<div class="t" style="left:639.88px;top:258px;font-size:15.2px;color:#fff;font-family:'Liberation Sans',sans-serif;font-weight:bold;transform:translateY(0.52px) scaleX(0.8000) rotate(0.03deg);">L</div>
<div class="abs" style="left:651.6999999999999px;top:255.82px;width:19.30px;height:19.00px;background:#f6f7f5;border:1px solid #e3e9df;"></div>
<div class="t" style="left:675.39px;top:258px;font-size:15.2px;color:#fff;font-family:'Liberation Sans',sans-serif;font-weight:bold;transform:translateY(0.52px) scaleX(1.0061) rotate(0.03deg);">Concat</div>
<div class="abs" style="left:749.0px;top:255.82px;width:19.30px;height:19.00px;background:#f6f7f5;border:1px solid #e3e9df;"></div>
<div class="t" style="left:772.67px;top:258px;font-size:15.2px;color:#fff;font-family:'Liberation Sans',sans-serif;font-weight:bold;transform:translateY(0.52px) scaleX(1.1462) rotate(0.03deg);">MaxWi</div>
<div class="abs" style="left:826.8px;top:255.82px;width:19.30px;height:19.00px;background:#f6f7f5;border:1px solid #e3e9df;"></div>
<div class="t" style="left:70.92px;top:282px;font-size:15.5px;color:#1a1a1a;font-family:'Liberation Sans',sans-serif;transform:translateY(0.00px) scaleX(1.0275) rotate(0.03deg);-webkit-text-stroke:0.25px #1a1a1a;">2010</div>
<div class="t" style="left:114.10px;top:282px;font-size:15.5px;color:#1a1a1a;font-family:'Liberation Sans',sans-serif;transform:translateY(0.00px) scaleX(0.8882) rotate(0.03deg);-webkit-text-stroke:0.25px #1a1a1a;">AL</div>
<div class="t" style="left:170.00px;top:282px;font-size:15.5px;color:#1a1a1a;font-family:'Liberation Sans',sans-serif;transform:translateY(0.00px) scaleX(0.9096) rotate(0.03deg);-webkit-text-stroke:0.25px #1a1a1a;">CHA</div>
<div class="t" style="left:252.16px;top:282px;font-size:15.5px;color:#1a1a1a;font-family:'Liberation Sans',sans-serif;transform:translateY(0.00px) scaleX(0.9502) rotate(0.03deg);-webkit-text-stroke:0.25px #1a1a1a;">CHW</div>
<div class="t" style="left:343.04px;top:282px;font-size:15.5px;color:#1a1a1a;font-family:'Liberation Sans',sans-serif;transform:translateY(0.00px) scaleX(0.8501) rotate(0.03deg);-webkit-text-stroke:0.25px #1a1a1a;">C</div>
<div class="t" style="left:458.41px;top:282px;font-size:15.5px;color:#1a1a1a;font-family:'Liberation Sans',sans-serif;transform:translateY(0.00px) scaleX(1.1231) rotate(0.03deg);-webkit-text-stroke:0.25px #1a1a1a;">2</div>
<div class="t" style="left:479.70px;top:282px;font-size:15.5px;color:#1a1a1a;font-family:'Liberation Sans',sans-serif;transform:translateY(0.00px) scaleX(1.0625) rotate(0.03deg);-webkit-text-stroke:0.25px #1a1a1a;">162</div>
<div class="t" style="left:513.95px;top:282px;font-size:15.5px;color:#1a1a1a;font-family:'Liberation Sans',sans-serif;transform:translateY(0.00px) scaleX(1.0474) rotate(0.03deg);-webkit-text-stroke:0.25px #1a1a1a;">81</div>
<div class="t" style="left:614.31px;top:282px;font-size:15.5px;color:#1a1a1a;font-family:'Liberation Sans',sans-serif;transform:translateY(0.00px) scaleX(1.0423) rotate(0.03deg);-webkit-text-stroke:0.25px #1a1a1a;">88</div>
<div class="t" style="left:650.46px;top:282px;font-size:15.5px;color:#1a1a1a;font-family:'Liberation Sans',sans-serif;transform:translateY(0.00px) scaleX(1.0373) rotate(0.03deg);-webkit-text-stroke:0.25px #1a1a1a;">74</div>
<div class="t" style="left:675.46px;top:282px;font-size:15.5px;color:#1a1a1a;font-family:'Liberation Sans',sans-serif;transform:translateY(0.00px) scaleX(0.9544) rotate(0.03deg);-webkit-text-stroke:0.25px #1a1a1a;">2010ALC</div>
<div class="t" style="left:70.92px;top:305px;font-size:15.5px;color:#1a1a1a;font-family:'Liberation Sans',sans-serif;transform:translateY(0.38px) scaleX(1.0275) rotate(0.03deg);-webkit-text-stroke:0.25px #1a1a1a;">2010</div>
<div class="t" style="left:114.10px;top:305px;font-size:15.5px;color:#1a1a1a;font-family:'Liberation Sans',sans-serif;transform:translateY(0.38px) scaleX(0.8882) rotate(0.03deg);-webkit-text-stroke:0.25px #1a1a1a;">AL</div>
<div class="t" style="left:170.05px;top:305px;font-size:15.5px;color:#1a1a1a;font-family:'Liberation Sans',sans-serif;transform:translateY(0.38px) scaleX(0.8342) rotate(0.03deg);-webkit-text-stroke:0.25px #1a1a1a;">CLE</div>
<div class="t" style="left:252.25px;top:305px;font-size:15.5px;color:#1a1a1a;font-family:'Liberation Sans',sans-serif;transform:translateY(0.38px) scaleX(0.8342) rotate(0.03deg);-webkit-text-stroke:0.25px #1a1a1a;">CLE</div>
<div class="t" style="left:343.04px;top:305px;font-size:15.5px;color:#1a1a1a;font-family:'Liberation Sans',sans-serif;transform:translateY(0.38px) scaleX(0.8501) rotate(0.03deg);-webkit-text-stroke:0.25px #1a1a1a;">C</div>
<div class="t" style="left:458.97px;top:305px;font-size:15.5px;color:#1a1a1a;font-family:'Liberation Sans',sans-serif;transform:translateY(0.38px) scaleX(1.0019) rotate(0.03deg);-webkit-text-stroke:0.25px #1a1a1a;">4</div>
<div class="t" style="left:479.70px;top:305px;font-size:15.5px;color:#1a1a1a;font-family:'Liberation Sans',sans-serif;transform:translateY(0.38px) scaleX(1.0625) rotate(0.03deg);-webkit-text-stroke:0.25px #1a1a1a;">162</div>
<div class="t" style="left:513.95px;top:305px;font-size:15.5px;color:#1a1a1a;font-family:'Liberation Sans',sans-serif;transform:translateY(0.38px) scaleX(1.0474) rotate(0.03deg);-webkit-text-stroke:0.25px #1a1a1a;">81</div>
<div class="t" style="left:614.14px;top:305px;font-size:15.5px;color:#1a1a1a;font-family:'Liberation Sans',sans-serif;transform:translateY(0.38px) scaleX(1.0577) rotate(0.03deg);-webkit-text-stroke:0.25px #1a1a1a;">69</div>
<div class="t" style="left:650.53px;top:305px;font-size:15.5px;color:#1a1a1a;font-family:'Liberation Sans',sans-serif;transform:translateY(0.38px) scaleX(1.0474) rotate(0.03deg);-webkit-text-stroke:0.25px #1a1a1a;">93</div>
<div class="t" style="left:675.46px;top:305px;font-size:15.5px;color:#1a1a1a;font-family:'Liberation Sans',sans-serif;transform:translateY(0.38px) scaleX(0.9544) rotate(0.03deg);-webkit-text-stroke:0.25px #1a1a1a;">2010ALC</div>
<div class="t" style="left:70.92px;top:328px;font-size:15.5px;color:#1a1a1a;font-family:'Liberation Sans',sans-serif;transform:translateY(0.76px) scaleX(1.0275) rotate(0.03deg);-webkit-text-stroke:0.25px #1a1a1a;">2010</div>
<div class="t" style="left:114.10px;top:328px;font-size:15.5px;color:#1a1a1a;font-family:'Liberation Sans',sans-serif;transform:translateY(0.76px) scaleX(0.8882) rotate(0.03deg);-webkit-text-stroke:0.25px #1a1a1a;">AL</div>
<div class="t" style="left:169.58px;top:328px;font-size:15.5px;color:#1a1a1a;font-family:'Liberation Sans',sans-serif;transform:translateY(0.76px) scaleX(0.9015) rotate(0.03deg);-webkit-text-stroke:0.25px #1a1a1a;">DET</div>
<div class="t" style="left:251.78px;top:328px;font-size:15.5px;color:#1a1a1a;font-family:'Liberation Sans',sans-serif;transform:translateY(0.76px) scaleX(0.9015) rotate(0.03deg);-webkit-text-stroke:0.25px #1a1a1a;">DET</div>
<div class="t" style="left:343.04px;top:328px;font-size:15.5px;color:#1a1a1a;font-family:'Liberation Sans',sans-serif;transform:translateY(0.76px) scaleX(0.8501) rotate(0.03deg);-webkit-text-stroke:0.25px #1a1a1a;">C</div>
<div class="t" style="left:458.70px;top:328px;font-size:15.5px;color:#1a1a1a;font-family:'Liberation Sans',sans-serif;transform:translateY(0.76px) scaleX(1.0646) rotate(0.03deg);-webkit-text-stroke:0.25px #1a1a1a;">3</div>
<div class="t" style="left:479.70px;top:328px;font-size:15.5px;color:#1a1a1a;font-family:'Liberation Sans',sans-serif;transform:translateY(0.76px) scaleX(1.0625) rotate(0.03deg);-webkit-text-stroke:0.25px #1a1a1a;">162</div>
<div class="t" style="left:513.95px;top:328px;font-size:15.5px;color:#1a1a1a;font-family:'Liberation Sans',sans-serif;transform:translateY(0.76px) scaleX(1.0474) rotate(0.03deg);-webkit-text-stroke:0.25px #1a1a1a;">81</div>
<div class="t" style="left:614.31px;top:328px;font-size:15.5px;color:#1a1a1a;font-family:'Liberation Sans',sans-serif;transform:translateY(0.76px) scaleX(1.0474) rotate(0.03deg);-webkit-text-stroke:0.25px #1a1a1a;">81</div>
<div class="t" style="left:650.61px;top:328px;font-size:15.5px;color:#1a1a1a;font-family:'Liberation Sans',sans-serif;transform:translateY(0.76px) scaleX(1.0474) rotate(0.03deg);-webkit-text-stroke:0.25px #1a1a1a;">81</div>
<div class="t" style="left:675.46px;top:328px;font-size:15.5px;color:#1a1a1a;font-family:'Liberation Sans',sans-serif;transform:translateY(0.76px) scaleX(0.9544) rotate(0.03deg);-webkit-text-stroke:0.25px #1a1a1a;">2010ALC</div>
<div class="t" style="left:70.92px;top:352px;font-size:15.5px;color:#1a1a1a;font-family:'Liberation Sans',sans-serif;transform:translateY(0.14px) scaleX(1.0275) rotate(0.03deg);-webkit-text-stroke:0.25px #1a1a1a;">2010</div>
<div class="t" style="left:114.10px;top:352px;font-size:15.5px;color:#1a1a1a;font-family:'Liberation Sans',sans-serif;transform:translateY(0.14px) scaleX(0.8882) rotate(0.03deg);-webkit-text-stroke:0.25px #1a1a1a;">AL</div>
<div class="t" style="left:169.60px;top:352px;font-size:15.5px;color:#1a1a1a;font-family:'Liberation Sans',sans-serif;transform:translateY(0.14px) scaleX(0.8908) rotate(0.03deg);-webkit-text-stroke:0.25px #1a1a1a;">KCA</div>
<div class="t" style="left:251.83px;top:352px;font-size:15.5px;color:#1a1a1a;font-family:'Liberation Sans',sans-serif;transform:translateY(0.14px) scaleX(0.8662) rotate(0.03deg);-webkit-text-stroke:0.25px #1a1a1a;">KCR</div>
<div class="t" style="left:343.04px;top:352px;font-size:15.5px;color:#1a1a1a;font-family:'Liberation Sans',sans-serif;transform:translateY(0.14px) scaleX(0.8501) rotate(0.03deg);-webkit-text-stroke:0.25px #1a1a1a;">C</div>
<div class="t" style="left:458.61px;top:352px;font-size:15.5px;color:#1a1a1a;font-family:'Liberation Sans',sans-serif;transform:translateY(0.14px) scaleX(1.0758) rotate(0.03deg);-webkit-text-stroke:0.25px #1a1a1a;">5</div>
<div class="t" style="left:479.70px;top:352px;font-size:15.5px;color:#1a1a1a;font-family:'Liberation Sans',sans-serif;transform:translateY(0.14px) scaleX(1.0625) rotate(0.03deg);-webkit-text-stroke:0.25px #1a1a1a;">162</div>
<div class="t" style="left:513.95px;top:352px;font-size:15.5px;color:#1a1a1a;font-family:'Liberation Sans',sans-serif;transform:translateY(0.14px) scaleX(1.0474) rotate(0.03deg);-webkit-text-stroke:0.25px #1a1a1a;">81</div>
<div class="t" style="left:614.14px;top:352px;font-size:15.5px;color:#1a1a1a;font-family:'Liberation Sans',sans-serif;transform:translateY(0.14px) scaleX(1.0630) rotate(0.03deg);-webkit-text-stroke:0.25px #1a1a1a;">67</div>
<div class="t" style="left:650.53px;top:352px;font-size:15.5px;color:#1a1a1a;font-family:'Liberation Sans',sans-serif;transform:translateY(0.14px) scaleX(1.0474) rotate(0.03deg);-webkit-text-stroke:0.25px #1a1a1a;">95</div>
<div class="t" style="left:675.46px;top:352px;font-size:15.5px;color:#1a1a1a;font-family:'Liberation Sans',sans-serif;transform:translateY(0.14px) scaleX(0.9544) rotate(0.03deg);-webkit-text-stroke:0.25px #1a1a1a;">2010ALC</div>
<div class="t" style="left:70.92px;top:375px;font-size:15.5px;color:#1a1a1a;font-family:'Liberation Sans',sans-serif;transform:translateY(0.52px) scaleX(1.0275) rotate(0.03deg);-webkit-text-stroke:0.25px #1a1a1a;">2010</div>
<div class="t" style="left:114.10px;top:375px;font-size:15.5px;color:#1a1a1a;font-family:'Liberation Sans',sans-serif;transform:translateY(0.52px) scaleX(0.8882) rotate(0.03deg);-webkit-text-stroke:0.25px #1a1a1a;">AL</div>
<div class="t" style="left:169.29px;top:375px;font-size:15.5px;color:#1a1a1a;font-family:'Liberation Sans',sans-serif;transform:translateY(0.52px) scaleX(1.1339) rotate(0.03deg);-webkit-text-stroke:0.25px #1a1a1a;">MIN</div>
<div class="t" style="left:251.49px;top:375px;font-size:15.5px;color:#1a1a1a;font-family:'Liberation Sans',sans-serif;transform:translateY(0.52px) scaleX(1.1339) rotate(0.03deg);-webkit-text-stroke:0.25px #1a1a1a;">MIN</div>
<div class="t" style="left:343.04px;top:375px;font-size:15.5px;color:#1a1a1a;font-family:'Liberation Sans',sans-serif;transform:translateY(0.52px) scaleX(0.8501) rotate(0.03deg);-webkit-text-stroke:0.25px #1a1a1a;">C</div>
<div class="t" style="left:457.91px;top:375px;font-size:15.5px;color:#1a1a1a;font-family:'Liberation Sans',sans-serif;transform:translateY(0.52px) scaleX(1.1747) rotate(0.03deg);-webkit-text-stroke:0.25px #1a1a1a;">1</div>
<div class="t" style="left:479.70px;top:375px;font-size:15.5px;color:#1a1a1a;font-family:'Liberation Sans',sans-serif;transform:translateY(0.52px) scaleX(1.0625) rotate(0.03deg);-webkit-text-stroke:0.25px #1a1a1a;">162</div>
<div class="t" style="left:513.95px;top:375px;font-size:15.5px;color:#1a1a1a;font-family:'Liberation Sans',sans-serif;transform:translateY(0.52px) scaleX(1.0474) rotate(0.03deg);-webkit-text-stroke:0.25px #1a1a1a;">81</div>
<div class="t" style="left:614.24px;top:375px;font-size:15.5px;color:#1a1a1a;font-family:'Liberation Sans',sans-serif;transform:translateY(0.52px) scaleX(1.0323) rotate(0.03deg);-webkit-text-stroke:0.25px #1a1a1a;">94</div>
<div class="t" style="left:650.44px;top:375px;font-size:15.5px;color:#1a1a1a;font-family:'Liberation Sans',sans-serif;transform:translateY(0.52px) scaleX(1.0525) rotate(0.03deg);-webkit-text-stroke:0.25px #1a1a1a;">68</div>
<div class="t" style="left:675.46px;top:375px;font-size:15.5px;color:#1a1a1a;font-family:'Liberation Sans',sans-serif;transform:translateY(0.52px) scaleX(0.9544) rotate(0.03deg);-webkit-text-stroke:0.25px #1a1a1a;">2010ALC</div>
<div class="t" style="left:70.92px;top:398px;font-size:15.5px;color:#1a1a1a;font-family:'Liberation Sans',sans-serif;transform:translateY(0.90px) scaleX(1.0275) rotate(0.03deg);-webkit-text-stroke:0.25px #1a1a1a;">2010</div>
<div class="t" style="left:114.10px;top:398px;font-size:15.5px;color:#1a1a1a;font-family:'Liberation Sans',sans-serif;transform:translateY(0.90px) scaleX(0.8882) rotate(0.03deg);-webkit-text-stroke:0.25px #1a1a1a;">AL</div>
<div class="t" style="left:169.54px;top:398px;font-size:15.5px;color:#1a1a1a;font-family:'Liberation Sans',sans-serif;transform:translateY(0.90px) scaleX(0.9329) rotate(0.03deg);-webkit-text-stroke:0.25px #1a1a1a;">BAL</div>
<div class="t" style="left:251.74px;top:398px;font-size:15.5px;color:#1a1a1a;font-family:'Liberation Sans',sans-serif;transform:translateY(0.90px) scaleX(0.9329) rotate(0.03deg);-webkit-text-stroke:0.25px #1a1a1a;">BAL</div>
<div class="t" style="left:342.59px;top:398px;font-size:15.5px;color:#1a1a1a;font-family:'Liberation Sans',sans-serif;transform:translateY(0.90px) scaleX(0.8989) rotate(0.03deg);-webkit-text-stroke:0.25px #1a1a1a;">E</div>
<div class="t" style="left:458.61px;top:398px;font-size:15.5px;color:#1a1a1a;font-family:'Liberation Sans',sans-serif;transform:translateY(0.90px) scaleX(1.0758) rotate(0.03deg);-webkit-text-stroke:0.25px #1a1a1a;">5</div>
<div class="t" style="left:479.70px;top:398px;font-size:15.5px;color:#1a1a1a;font-family:'Liberation Sans',sans-serif;transform:translateY(0.90px) scaleX(1.0625) rotate(0.03deg);-webkit-text-stroke:0.25px #1a1a1a;">162</div>
<div class="t" style="left:513.95px;top:398px;font-size:15.5px;color:#1a1a1a;font-family:'Liberation Sans',sans-serif;transform:translateY(0.90px) scaleX(1.0474) rotate(0.03deg);-webkit-text-stroke:0.25px #1a1a1a;">81</div>
<div class="t" style="left:614.14px;top:398px;font-size:15.5px;color:#1a1a1a;font-family:'Liberation Sans',sans-serif;transform:translateY(0.90px) scaleX(1.0525) rotate(0.03deg);-webkit-text-stroke:0.25px #1a1a1a;">66</div>
<div class="t" style="left:650.53px;top:398px;font-size:15.5px;color:#1a1a1a;font-family:'Liberation Sans',sans-serif;transform:translateY(0.90px) scaleX(1.0474) rotate(0.03deg);-webkit-text-stroke:0.25px #1a1a1a;">96</div>
<div class="t" style="left:675.46px;top:398px;font-size:15.5px;color:#1a1a1a;font-family:'Liberation Sans',sans-serif;transform:translateY(0.90px) scaleX(0.9562) rotate(0.03deg);-webkit-text-stroke:0.25px #1a1a1a;">2010ALE</div>
<div class="t" style="left:70.92px;top:422px;font-size:15.5px;color:#1a1a1a;font-family:'Liberation Sans',sans-serif;transform:translateY(0.28px) scaleX(1.0275) rotate(0.03deg);-webkit-text-stroke:0.25px #1a1a1a;">2010</div>
<div class="t" style="left:114.10px;top:422px;font-size:15.5px;color:#1a1a1a;font-family:'Liberation Sans',sans-serif;transform:translateY(0.28px) scaleX(0.8882) rotate(0.03deg);-webkit-text-stroke:0.25px #1a1a1a;">AL</div>
<div class="t" style="left:169.58px;top:422px;font-size:15.5px;color:#1a1a1a;font-family:'Liberation Sans',sans-serif;transform:translateY(0.28px) scaleX(0.9048) rotate(0.03deg);-webkit-text-stroke:0.25px #1a1a1a;">BOS</div>
<div class="t" style="left:251.78px;top:422px;font-size:15.5px;color:#1a1a1a;font-family:'Liberation Sans',sans-serif;transform:translateY(0.28px) scaleX(0.9048) rotate(0.03deg);-webkit-text-stroke:0.25px #1a1a1a;">BOS</div>
<div class="t" style="left:342.59px;top:422px;font-size:15.5px;color:#1a1a1a;font-family:'Liberation Sans',sans-serif;transform:translateY(0.28px) scaleX(0.8989) rotate(0.03deg);-webkit-text-stroke:0.25px #1a1a1a;">E</div>
<div class="t" style="left:458.70px;top:422px;font-size:15.5px;color:#1a1a1a;font-family:'Liberation Sans',sans-serif;transform:translateY(0.28px) scaleX(1.0646) rotate(0.03deg);-webkit-text-stroke:0.25px #1a1a1a;">3</div>
<div class="t" style="left:479.70px;top:422px;font-size:15.5px;color:#1a1a1a;font-family:'Liberation Sans',sans-serif;transform:translateY(0.28px) scaleX(1.0625) rotate(0.03deg);-webkit-text-stroke:0.25px #1a1a1a;">162</div>
<div class="t" style="left:513.95px;top:422px;font-size:15.5px;color:#1a1a1a;font-family:'Liberation Sans',sans-serif;transform:translateY(0.28px) scaleX(1.0474) rotate(0.03deg);-webkit-text-stroke:0.25px #1a1a1a;">81</div>
<div class="t" style="left:614.31px;top:422px;font-size:15.5px;color:#1a1a1a;font-family:'Liberation Sans',sans-serif;transform:translateY(0.28px) scaleX(1.0474) rotate(0.03deg);-webkit-text-stroke:0.25px #1a1a1a;">89</div>
<div class="t" style="left:650.44px;top:422px;font-size:15.5px;color:#1a1a1a;font-family:'Liberation Sans',sans-serif;transform:translateY(0.28px) scaleX(1.0525) rotate(0.03deg);-webkit-text-stroke:0.25px #1a1a1a;">73</div>
<div class="t" style="left:675.46px;top:422px;font-size:15.5px;color:#1a1a1a;font-family:'Liberation Sans',sans-serif;transform:translateY(0.28px) scaleX(0.9562) rotate(0.03deg);-webkit-text-stroke:0.25px #1a1a1a;">2010ALE</div>
<div class="t" style="left:70.92px;top:445px;font-size:15.5px;color:#1a1a1a;font-family:'Liberation Sans',sans-serif;transform:translateY(0.66px) scaleX(1.0275) rotate(0.03deg);-webkit-text-stroke:0.25px #1a1a1a;">2010</div>
<div class="t" style="left:114.10px;top:445px;font-size:15.5px;color:#1a1a1a;font-family:'Liberation Sans',sans-serif;transform:translateY(0.66px) scaleX(0.8882) rotate(0.03deg);-webkit-text-stroke:0.25px #1a1a1a;">AL</div>
<div class="t" style="left:169.49px;top:445px;font-size:15.5px;color:#1a1a1a;font-family:'Liberation Sans',sans-serif;transform:translateY(0.66px) scaleX(0.9727) rotate(0.03deg);-webkit-text-stroke:0.25px #1a1a1a;">NYA</div>
<div class="t" style="left:251.79px;top:445px;font-size:15.5px;color:#1a1a1a;font-family:'Liberation Sans',sans-serif;transform:translateY(0.66px) scaleX(0.8931) rotate(0.03deg);-webkit-text-stroke:0.25px #1a1a1a;">NYY</div>
<div class="t" style="left:342.59px;top:445px;font-size:15.5px;color:#1a1a1a;font-family:'Liberation Sans',sans-serif;transform:translateY(0.66px) scaleX(0.8989) rotate(0.03deg);-webkit-text-stroke:0.25px #1a1a1a;">E</div>
<div class="t" style="left:458.41px;top:445px;font-size:15.5px;color:#1a1a1a;font-family:'Liberation Sans',sans-serif;transform:translateY(0.66px) scaleX(1.1231) rotate(0.03deg);-webkit-text-stroke:0.25px #1a1a1a;">2</div>
<div class="t" style="left:479.70px;top:445px;font-size:15.5px;color:#1a1a1a;font-family:'Liberation Sans',sans-serif;transform:translateY(0.66px) scaleX(1.0625) rotate(0.03deg);-webkit-text-stroke:0.25px #1a1a1a;">162</div>
<div class="t" style="left:513.95px;top:445px;font-size:15.5px;color:#1a1a1a;font-family:'Liberation Sans',sans-serif;transform:translateY(0.66px) scaleX(1.0474) rotate(0.03deg);-webkit-text-stroke:0.25px #1a1a1a;">81</div>
<div class="t" style="left:614.23px;top:445px;font-size:15.5px;color:#1a1a1a;font-family:'Liberation Sans',sans-serif;transform:translateY(0.66px) scaleX(1.0474) rotate(0.03deg);-webkit-text-stroke:0.25px #1a1a1a;">95</div>
<div class="t" style="left:650.44px;top:445px;font-size:15.5px;color:#1a1a1a;font-family:'Liberation Sans',sans-serif;transform:translateY(0.66px) scaleX(1.0630) rotate(0.03deg);-webkit-text-stroke:0.25px #1a1a1a;">67</div>
<div class="t" style="left:675.46px;top:445px;font-size:15.5px;color:#1a1a1a;font-family:'Liberation Sans',sans-serif;transform:translateY(0.66px) scaleX(0.9562) rotate(0.03deg);-webkit-text-stroke:0.25px #1a1a1a;">2010ALE</div>
<div class="t" style="left:70.92px;top:469px;font-size:15.5px;color:#1a1a1a;font-family:'Liberation Sans',sans-serif;transform:translateY(0.04px) scaleX(1.0275) rotate(0.03deg);-webkit-text-stroke:0.25px #1a1a1a;">2010</div>
<div class="t" style="left:114.10px;top:469px;font-size:15.5px;color:#1a1a1a;font-family:'Liberation Sans',sans-serif;transform:translateY(0.04px) scaleX(0.8882) rotate(0.03deg);-webkit-text-stroke:0.25px #1a1a1a;">AL</div>
<div class="t" style="left:170.42px;top:469px;font-size:15.5px;color:#1a1a1a;font-family:'Liberation Sans',sans-serif;transform:translateY(0.04px) scaleX(0.9013) rotate(0.03deg);-webkit-text-stroke:0.25px #1a1a1a;">TBA</div>
<div class="t" style="left:252.62px;top:469px;font-size:15.5px;color:#1a1a1a;font-family:'Liberation Sans',sans-serif;transform:translateY(0.04px) scaleX(0.9173) rotate(0.03deg);-webkit-text-stroke:0.25px #1a1a1a;">TBD</div>
<div class="t" style="left:342.59px;top:469px;font-size:15.5px;color:#1a1a1a;font-family:'Liberation Sans',sans-serif;transform:translateY(0.04px) scaleX(0.8989) rotate(0.03deg);-webkit-text-stroke:0.25px #1a1a1a;">E</div>
<div class="t" style="left:457.91px;top:469px;font-size:15.5px;color:#1a1a1a;font-family:'Liberation Sans',sans-serif;transform:translateY(0.04px) scaleX(1.1747) rotate(0.03deg);-webkit-text-stroke:0.25px #1a1a1a;">1</div>
<div class="t" style="left:479.70px;top:469px;font-size:15.5px;color:#1a1a1a;font-family:'Liberation Sans',sans-serif;transform:translateY(0.04px) scaleX(1.0625) rotate(0.03deg);-webkit-text-stroke:0.25px #1a1a1a;">162</div>
<div class="t" style="left:513.95px;top:469px;font-size:15.5px;color:#1a1a1a;font-family:'Liberation Sans',sans-serif;transform:translateY(0.04px) scaleX(1.0474) rotate(0.03deg);-webkit-text-stroke:0.25px #1a1a1a;">81</div>
<div class="t" style="left:614.23px;top:469px;font-size:15.5px;color:#1a1a1a;font-family:'Liberation Sans',sans-serif;transform:translateY(0.04px) scaleX(1.0474) rotate(0.03deg);-webkit-text-stroke:0.25px #1a1a1a;">96</div>
<div class="t" style="left:650.44px;top:469px;font-size:15.5px;color:#1a1a1a;font-family:'Liberation Sans',sans-serif;transform:translateY(0.04px) scaleX(1.0525) rotate(0.03deg);-webkit-text-stroke:0.25px #1a1a1a;">66</div>
<div class="t" style="left:675.46px;top:469px;font-size:15.5px;color:#1a1a1a;font-family:'Liberation Sans',sans-serif;transform:translateY(0.04px) scaleX(0.9562) rotate(0.03deg);-webkit-text-stroke:0.25px #1a1a1a;">2010ALE</div>
<div class="t" style="left:70.92px;top:492px;font-size:15.5px;color:#1a1a1a;font-family:'Liberation Sans',sans-serif;transform:translateY(0.42px) scaleX(1.0275) rotate(0.03deg);-webkit-text-stroke:0.25px #1a1a1a;">2010</div>
<div class="t" style="left:114.10px;top:492px;font-size:15.5px;color:#1a1a1a;font-family:'Liberation Sans',sans-serif;transform:translateY(0.42px) scaleX(0.8882) rotate(0.03deg);-webkit-text-stroke:0.25px #1a1a1a;">AL</div>
<div class="t" style="left:170.42px;top:492px;font-size:15.5px;color:#1a1a1a;font-family:'Liberation Sans',sans-serif;transform:translateY(0.42px) scaleX(0.9017) rotate(0.03deg);-webkit-text-stroke:0.25px #1a1a1a;">TOR</div>
<div class="t" style="left:252.62px;top:492px;font-size:15.5px;color:#1a1a1a;font-family:'Liberation Sans',sans-serif;transform:translateY(0.42px) scaleX(0.9017) rotate(0.03deg);-webkit-text-stroke:0.25px #1a1a1a;">TOR</div>
<div class="t" style="left:342.59px;top:492px;font-size:15.5px;color:#1a1a1a;font-family:'Liberation Sans',sans-serif;transform:translateY(0.42px) scaleX(0.8989) rotate(0.03deg);-webkit-text-stroke:0.25px #1a1a1a;">E</div>
<div class="t" style="left:458.97px;top:492px;font-size:15.5px;color:#1a1a1a;font-family:'Liberation Sans',sans-serif;transform:translateY(0.42px) scaleX(1.0019) rotate(0.03deg);-webkit-text-stroke:0.25px #1a1a1a;">4</div>
<div class="t" style="left:479.70px;top:492px;font-size:15.5px;color:#1a1a1a;font-family:'Liberation Sans',sans-serif;transform:translateY(0.42px) scaleX(1.0625) rotate(0.03deg);-webkit-text-stroke:0.25px #1a1a1a;">162</div>
<div class="t" style="left:513.78px;top:492px;font-size:15.5px;color:#1a1a1a;font-family:'Liberation Sans',sans-serif;transform:translateY(0.42px) scaleX(1.0525) rotate(0.03deg);-webkit-text-stroke:0.25px #1a1a1a;">78</div>
<div class="t" style="left:614.31px;top:492px;font-size:15.5px;color:#1a1a1a;font-family:'Liberation Sans',sans-serif;transform:translateY(0.42px) scaleX(1.0423) rotate(0.03deg);-webkit-text-stroke:0.25px #1a1a1a;">85</div>
<div class="t" style="left:650.44px;top:492px;font-size:15.5px;color:#1a1a1a;font-family:'Liberation Sans',sans-serif;transform:translateY(0.42px) scaleX(1.0630) rotate(0.03deg);-webkit-text-stroke:0.25px #1a1a1a;">77</div>
<div class="t" style="left:675.46px;top:492px;font-size:15.5px;color:#1a1a1a;font-family:'Liberation Sans',sans-serif;transform:translateY(0.42px) scaleX(0.9562) rotate(0.03deg);-webkit-text-stroke:0.25px #1a1a1a;">2010ALE</div>
<div class="t" style="left:70.92px;top:515px;font-size:15.5px;color:#1a1a1a;font-family:'Liberation Sans',sans-serif;transform:translateY(0.80px) scaleX(1.0275) rotate(0.03deg);-webkit-text-stroke:0.25px #1a1a1a;">2010</div>
<div class="t" style="left:114.10px;top:515px;font-size:15.5px;color:#1a1a1a;font-family:'Liberation Sans',sans-serif;transform:translateY(0.80px) scaleX(0.8882) rotate(0.03deg);-webkit-text-stroke:0.25px #1a1a1a;">AL</div>
<div class="t" style="left:169.54px;top:515px;font-size:15.5px;color:#1a1a1a;font-family:'Liberation Sans',sans-serif;transform:translateY(0.80px) scaleX(0.9389) rotate(0.03deg);-webkit-text-stroke:0.25px #1a1a1a;">LAA</div>
<div class="t" style="left:252.90px;top:515px;font-size:15.5px;color:#1a1a1a;font-family:'Liberation Sans',sans-serif;transform:translateY(0.80px) scaleX(0.9490) rotate(0.03deg);-webkit-text-stroke:0.25px #1a1a1a;">ANA</div>
<div class="t" style="left:343.62px;top:515px;font-size:15.5px;color:#1a1a1a;font-family:'Liberation Sans',sans-serif;transform:translateY(0.80px) scaleX(1.0011) rotate(0.03deg);-webkit-text-stroke:0.25px #1a1a1a;">W</div>
<div class="t" style="left:458.70px;top:515px;font-size:15.5px;color:#1a1a1a;font-family:'Liberation Sans',sans-serif;transform:translateY(0.80px) scaleX(1.0646) rotate(0.03deg);-webkit-text-stroke:0.25px #1a1a1a;">3</div>
<div class="t" style="left:479.70px;top:515px;font-size:15.5px;color:#1a1a1a;font-family:'Liberation Sans',sans-serif;transform:translateY(0.80px) scaleX(1.0625) rotate(0.03deg);-webkit-text-stroke:0.25px #1a1a1a;">162</div>
<div class="t" style="left:513.95px;top:515px;font-size:15.5px;color:#1a1a1a;font-family:'Liberation Sans',sans-serif;transform:translateY(0.80px) scaleX(1.0474) rotate(0.03deg);-webkit-text-stroke:0.25px #1a1a1a;">81</div>
<div class="t" style="left:614.32px;top:515px;font-size:15.5px;color:#1a1a1a;font-family:'Liberation Sans',sans-serif;transform:translateY(0.80px) scaleX(1.0373) rotate(0.03deg);-webkit-text-stroke:0.25px #1a1a1a;">80</div>
<div class="t" style="left:650.61px;top:515px;font-size:15.5px;color:#1a1a1a;font-family:'Liberation Sans',sans-serif;transform:translateY(0.80px) scaleX(1.0525) rotate(0.03deg);-webkit-text-stroke:0.25px #1a1a1a;">82</div>
<div class="t" style="left:675.42px;top:515px;font-size:15.5px;color:#1a1a1a;font-family:'Liberation Sans',sans-serif;transform:translateY(0.80px) scaleX(1.0070) rotate(0.03deg);-webkit-text-stroke:0.25px #1a1a1a;">2010ALW</div>
<svg width="1024" height="532" viewBox="0 0 1024 532"><rect x="25.4" y="11.6" width="14.3" height="13.9" fill="none" stroke="#f2f5f2" stroke-width="1.7"/>
<rect x="24.6" y="20.3" width="15.9" height="6" fill="#f2f5f2"/>
<rect x="29.3" y="22.2" width="6.6" height="4.1" fill="#217346"/>
<rect x="32" y="22.2" width="1.3" height="3" fill="#f2f5f2"/>
<path d="M78.5,16.9 H86.6 C90.3,16.9 91.8,19.2 91.8,21.2 C91.8,23.6 89.8,25 86.6,25.2" stroke="#f2f5f2" stroke-width="2.7" fill="none" stroke-linecap="round"/>
<path d="M82.8,12.2 L77.6,16.9 L82.8,21.6" stroke="#f2f5f2" stroke-width="2.7" fill="none" stroke-linecap="round" stroke-linejoin="round"/>
<polygon points="103.7,16.4 109.7,16.4 106.7,20" fill="#f2f5f2"/>
<path d="M142.4,16.9 H134 C130.5,16.9 129.2,19.2 129.2,21.2 C129.2,23.6 131,25.2 134.5,25.4" stroke="#4b8866" stroke-width="2.1" fill="none" stroke-linecap="round"/>
<path d="M138.2,12.2 L143.3,16.9 L138.2,21.6" stroke="#4b8866" stroke-width="2.1" fill="none" stroke-linecap="round" stroke-linejoin="round"/>
<polygon points="156.5,16.6 161.5,16.6 159.0,19.4" fill="#4b8866"/>
<circle cx="191.8" cy="13.6" r="3.7" fill="none" stroke="#f2f5f2" stroke-width="1.5"/>
<path d="M190.6,13 a1.3,1.3 0 0 1 2.6,0 V18.2 L197.2,19.6 Q198.3,20 198.2,21.2 L197.8,26 H190.6 L186,21 Q186.4,19.6 187.8,19.8 L190.6,21.6 Z" fill="#f2f5f2" stroke="#217346" stroke-width="0.5"/>
<polygon points="211,16.2 217,16.2 214.0,19.8" fill="#f2f5f2"/>
<rect x="246" y="15.25" width="5.00" height="1.3" fill="#f2f5f2"/>
<polygon points="245.8,18 251.2,18 248.5,21.6" fill="#f2f5f2"/>
<path d="M931.2,58.2 C931,55.8 928.4,55 928.4,51.8 A5.3,5.3 0 0 1 939,51.8 C939,55 936.4,55.8 936.2,58.2 Z" fill="none" stroke="#a9c8b4" stroke-width="1.4"/>
<rect x="931.2" y="59.3" width="5" height="1.3" fill="#a9c8b4"/><rect x="931.6" y="61.4" width="4.2" height="1.4" fill="#a9c8b4"/>
<rect x="15" y="80.5" width="26.5" height="30.5" fill="#d9e3d3"/>
<path d="M20,85 V80.2 H25.2 V77.2 H31 V80.2 H36 V85 Z" fill="#9ea39c"/><rect x="26.8" y="78.6" width="2.6" height="2.2" fill="#f5f5f5"/>
<path d="M33.8,95 H44 L47.8,98.8 V112.6 H33.8 Z" fill="#fff" stroke="#a8a8a8" stroke-width="1.1"/><path d="M44,95 V98.8 H47.8" fill="none" stroke="#a8a8a8" stroke-width="1"/>
<polygon points="25.4,142.9 31.8,142.9 28.6,145.9" fill="#b3b3b3"/>
<path d="M59.4,77.6 L68.4,88.8 M70.4,77.6 L61.4,88.8" stroke="#4a4a4a" stroke-width="2.3" stroke-linecap="round"/>
<circle cx="60.4" cy="91.2" r="2.8" fill="none" stroke="#3b82c4" stroke-width="1.7"/><circle cx="69.4" cy="91.2" r="2.8" fill="none" stroke="#3b82c4" stroke-width="1.7"/>
<path d="M57.3,104.4 H63.4 L66.2,107.2 V116.6 H57.3 Z" fill="#fff" stroke="#5a5a5a" stroke-width="1"/>
<path d="M63.6,109.2 H70.4 L73.4,112.2 V121.1 H63.6 Z" fill="#fff" stroke="#5a5a5a" stroke-width="1"/>
<rect x="58.8" y="108.15" width="3.80" height="0.9" fill="#3b82c4"/>
<rect x="58.8" y="110.55" width="3.80" height="0.9" fill="#3b82c4"/>
<rect x="58.8" y="112.95" width="3.80" height="0.9" fill="#3b82c4"/>
<rect x="65.4" y="113.55" width="6.20" height="0.9" fill="#3b82c4"/>
<rect x="65.4" y="115.85" width="6.20" height="0.9" fill="#3b82c4"/>
<rect x="65.4" y="118.15" width="6.20" height="0.9" fill="#3b82c4"/>
<g transform="translate(66.2 140) scale(0.9) translate(-66 -140) rotate(-38 66 140)"><rect x="57.2" y="136.4" width="7.6" height="7.4" fill="#f2b94a"/><g fill="#dd6b2a"><rect x="58.4" y="137.6" width="1.2" height="1.2"/><rect x="61.4" y="137.6" width="1.2" height="1.2"/><rect x="59.9" y="139.6" width="1.2" height="1.2"/><rect x="62.6" y="140" width="1.2" height="1.2"/><rect x="58.4" y="141.6" width="1.2" height="1.2"/><rect x="61.4" y="141.8" width="1.2" height="1.2"/></g><rect x="64.8" y="136" width="2.6" height="8.2" fill="#555"/><rect x="67.4" y="138" width="7.6" height="4.2" rx="1" fill="#444"/></g>
<polygon points="121,111.2 127.5,111.2 124.25,114.8" fill="#666"/>
<path d="M170.2,170.4 V164.9 H175.7" stroke="#7a7a7a" stroke-width="1" fill="none"/>
<path d="M172.29999999999998,167.0 L176.2,170.9" stroke="#7a7a7a" stroke-width="1.1" fill="none"/>
<polygon points="177.2,168.0 177.2,171.9 173.29999999999998,171.9" fill="#7a7a7a"/>
<path d="M399.1,170.4 V164.9 H404.6" stroke="#7a7a7a" stroke-width="1" fill="none"/>
<path d="M401.20000000000005,167.0 L405.1,170.9" stroke="#7a7a7a" stroke-width="1.1" fill="none"/>
<polygon points="406.1,168.0 406.1,171.9 402.20000000000005,171.9" fill="#7a7a7a"/>
<path d="M700.5,170.4 V164.9 H706" stroke="#7a7a7a" stroke-width="1" fill="none"/>
<path d="M702.6,167.0 L706.5,170.9" stroke="#7a7a7a" stroke-width="1.1" fill="none"/>
<polygon points="707.5,168.0 707.5,171.9 703.6,171.9" fill="#7a7a7a"/>
<path d="M857.9,170.4 V164.9 H863.4" stroke="#7a7a7a" stroke-width="1" fill="none"/>
<path d="M860.0,167.0 L863.9,170.9" stroke="#7a7a7a" stroke-width="1.1" fill="none"/>
<polygon points="864.9,168.0 864.9,171.9 861.0,171.9" fill="#7a7a7a"/>
<polygon points="287.5,93.6 293.7,93.6 290.6,96.9" fill="#555"/>
<polygon points="346.2,93.6 352,93.6 349.1,96.9" fill="#555"/>
<polygon points="372.9,89.8 377.7,89.8 375.29999999999995,86.9" fill="#3b82c4"/>
<polygon points="397.4,86.9 402.2,86.9 399.79999999999995,89.8" fill="#3b82c4"/>
<polygon points="266.3,129.7 272.5,129.7 269.4,133" fill="#666"/>
<polygon points="313.2,129.7 319,129.7 316.1,133" fill="#666"/>
<polygon points="359.6,129.7 365.8,129.7 362.70000000000005,133" fill="#666"/>
<polygon points="397.5,129.7 403.7,129.7 400.6,133" fill="#666"/>
<rect x="289.3" y="122.9" width="15.6" height="15.6" fill="none" stroke="#c2c2c2" stroke-width="1.1"/><path d="M297.1,122.9 V138.5 M289.3,130.7 H304.9" stroke="#c2c2c2" stroke-width="1.1"/>
<path d="M337.8,130.6 L344.6,124 L350.6,130 L344.2,135.6 Z" fill="#fff" stroke="#777" stroke-width="1.4" stroke-linejoin="round"/>
<path d="M341.8,126.8 V123.6 a1.9,1.9 0 0 1 3.8,0 V125" fill="none" stroke="#777" stroke-width="1.3"/>
<path d="M348.2,126.4 C352.8,127.4 354,131.8 351,135.6 C351.6,131.6 350.6,129 348.2,126.4 Z" fill="#3b82c4" stroke="#3b82c4" stroke-width="0.6"/>
<rect x="334.1" y="136.2" width="19.9" height="4.9" fill="#fff200"/>
<rect x="372.5" y="136.2" width="19.3" height="4.9" fill="#f50a0a"/>
<rect x="420" y="86.40" width="18.00" height="1.2" fill="#7a7a7a"/>
<rect x="422.4" y="89.40" width="13.40" height="1.2" fill="#7a7a7a"/>
<rect x="420" y="92.30" width="18.00" height="1.2" fill="#7a7a7a"/>
<rect x="445.2" y="90.10" width="17.70" height="1.2" fill="#7a7a7a"/>
<rect x="447.4" y="93.30" width="13.70" height="1.2" fill="#7a7a7a"/>
<rect x="445.2" y="96.20" width="17.70" height="1.2" fill="#7a7a7a"/>
<rect x="447.4" y="99.40" width="13.70" height="1.2" fill="#7a7a7a"/>
<rect x="470.5" y="94.30" width="17.70" height="1.2" fill="#666"/>
<rect x="472.7" y="97.20" width="13.70" height="1.2" fill="#666"/>
<rect x="470.5" y="100.10" width="17.70" height="1.2" fill="#666"/>
<rect x="472.7" y="103.10" width="13.70" height="1.2" fill="#666"/>
<rect x="421.8" y="126.20" width="14.00" height="1.2" fill="#7a7a7a"/>
<rect x="446.4" y="126.20" width="15.50" height="1.2" fill="#7a7a7a"/>
<rect x="472.7" y="126.20" width="14.00" height="1.2" fill="#7a7a7a"/>
<rect x="421.8" y="129.10" width="11.20" height="1.2" fill="#7a7a7a"/>
<rect x="449.3" y="129.10" width="9.70" height="1.2" fill="#7a7a7a"/>
<rect x="475.6" y="129.10" width="11.10" height="1.2" fill="#7a7a7a"/>
<rect x="421.8" y="132.30" width="14.00" height="1.2" fill="#7a7a7a"/>
<rect x="446.4" y="132.30" width="15.50" height="1.2" fill="#7a7a7a"/>
<rect x="472.7" y="132.30" width="14.00" height="1.2" fill="#7a7a7a"/>
<rect x="421.8" y="135.20" width="11.20" height="1.2" fill="#7a7a7a"/>
<rect x="449.3" y="135.20" width="9.70" height="1.2" fill="#7a7a7a"/>
<rect x="475.6" y="135.20" width="11.10" height="1.2" fill="#7a7a7a"/>
<g transform="rotate(-47 511 94)"><text x="503.2" y="97.6" font-family="Liberation Sans, sans-serif" font-size="11.5" fill="#555" textLength="12.5" lengthAdjust="spacingAndGlyphs">ab</text></g>
<path d="M512.6,102.6 L521.6,93.4" stroke="#555" stroke-width="1.3"/><path d="M517.4,92.8 L522.4,92.6 L522.2,97.6" fill="none" stroke="#555" stroke-width="1.3"/>
<polygon points="527.3,93.3 533.2,93.3 530.25,96.5" fill="#666"/>
<rect x="564.7" y="87.2" width="10.8" height="16" fill="none" stroke="#6e6e6e" stroke-width="1.2"/>
<rect x="564.7" y="92.15" width="10.80" height="1.1" fill="#6e6e6e"/>
<rect x="566.6" y="89.20" width="7.80" height="1.2" fill="#3b82c4"/>
<rect x="566.6" y="96.00" width="6.80" height="1.2" fill="#3b82c4"/>
<rect x="566.6" y="99.30" width="6.80" height="1.2" fill="#3b82c4"/>
<path d="M575.5,89.2 H579.2 a3.4,3.4 0 0 1 0,6.8 H577.6" fill="none" stroke="#2f7ac0" stroke-width="1.7"/><polygon points="574.6,96 578.4,93 578.4,99" fill="#2f7ac0"/>
<rect x="504.5" y="123.60" width="18.00" height="1.2" fill="#7a7a7a"/>
<rect x="504.5" y="138.10" width="18.00" height="1.2" fill="#7a7a7a"/>
<rect x="513.9" y="126.50" width="8.60" height="1.2" fill="#7a7a7a"/>
<rect x="513.9" y="129.40" width="8.60" height="1.2" fill="#7a7a7a"/>
<rect x="513.9" y="132.30" width="8.60" height="1.2" fill="#7a7a7a"/>
<rect x="513.9" y="135.20" width="8.60" height="1.2" fill="#7a7a7a"/>
<rect x="530.2" y="123.60" width="18.00" height="1.2" fill="#7a7a7a"/>
<rect x="530.2" y="138.10" width="18.00" height="1.2" fill="#7a7a7a"/>
<rect x="539.2" y="126.50" width="9.00" height="1.2" fill="#7a7a7a"/>
<rect x="539.2" y="129.40" width="9.00" height="1.2" fill="#7a7a7a"/>
<rect x="539.2" y="132.30" width="9.00" height="1.2" fill="#7a7a7a"/>
<rect x="539.2" y="135.20" width="9.00" height="1.2" fill="#7a7a7a"/>
<path d="M505.4,131.6 H513.2" stroke="#2f78c0" stroke-width="2.2"/><path d="M509.2,127.8 L505.4,131.6 L509.2,135.4" fill="none" stroke="#2f78c0" stroke-width="2.2"/>
<path d="M530.2,131.6 H538" stroke="#2f78c0" stroke-width="2.2"/><path d="M534.2,127.8 L538,131.6 L534.2,135.4" fill="none" stroke="#2f78c0" stroke-width="2.2"/>
<rect x="564" y="122.5" width="17.4" height="16.6" fill="none" stroke="#bdbdbd" stroke-width="1.1"/>
<path d="M564,126.6 H581.4 M564,135 H581.4 M570,122.5 V126.6 M575.6,122.5 V126.6 M570,135 V139.1 M575.6,135 V139.1" stroke="#bdbdbd" stroke-width="1"/>
<path d="M567,130.8 H578.4 M569,128.8 L567,130.8 L569,132.8 M576.4,128.8 L578.4,130.8 L576.4,132.8" fill="none" stroke="#bdbdbd" stroke-width="1"/>
<polygon points="698.4,129.2 704.7,129.2 701.55,132.4" fill="#bdbdbd"/>
<polygon points="855,93.4 862,93.4 858.5,97" fill="#555"/>
<polygon points="746.5,128.8 752.3,128.8 749.4,132" fill="#666"/>
<text font-family="Liberation Sans, sans-serif" font-size="9.2" fill="#555"><tspan x="828.2" y="130.3">.0</tspan><tspan x="821.4" y="139.3" textLength="13.6" lengthAdjust="spacingAndGlyphs">.00</tspan><tspan x="848.2" y="130.3" textLength="12.6" lengthAdjust="spacingAndGlyphs">.00</tspan><tspan x="853.2" y="139.3">.0</tspan></text>
<path d="M821.2,127.7 H828 M824.2,124.8 L821.2,127.7 L824.2,130.6" fill="none" stroke="#2f7ac0" stroke-width="1.7"/>
<path d="M846,136.6 H852.8 M849.8,133.7 L852.8,136.6 L849.8,139.5" fill="none" stroke="#2f7ac0" stroke-width="1.7"/>
<rect x="901.6" y="81.2" width="32.6" height="26.2" fill="#fff" stroke="#8c8c8c" stroke-width="1.1"/>
<path d="M901.6,87.7 H934.2 M901.6,94.7 H934.2 M901.6,101.1 H934.2 M911.7,81.2 V107.4 M923.3,81.2 V107.4" stroke="#9a9a9a" stroke-width="0.9"/>
<rect x="911.7" y="81.2" width="7.3" height="6.5" fill="#d8503f"/><rect x="911.7" y="88.1" width="11" height="6.4" fill="#3b78c3"/><rect x="911.7" y="95" width="8.3" height="6" fill="#d8503f"/><rect x="911.7" y="101.4" width="5.3" height="6" fill="#3b78c3"/>
<rect x="919.8" y="99.9" width="16.6" height="13" fill="#fff" stroke="#666" stroke-width="1.1"/>
<path d="M924.4,104.8 H932 M924.4,108 H932 M930.4,102.4 L926,110.6" stroke="#333" stroke-width="1.1"/>
<polygon points="952.4,143.2 958.2,143.2 955.3,146.2" fill="#555"/>
<rect x="978.8" y="81" width="31" height="26.4" fill="#fff"/>
<rect x="986.7" y="87.7" width="23.1" height="19.7" fill="#a9d9ef"/>
<rect x="978.8" y="81" width="31" height="26.4" fill="none" stroke="#8c8c8c" stroke-width="1.1"/>
<path d="M978.8,87.7 H1009.8 M978.8,94.4 H1009.8 M978.8,101 H1009.8 M986.7,81 V107.4 M994.4,81 V107.4 M1002.2,81 V107.4" stroke="#9a9a9a" stroke-width="0.9"/>
<path d="M1014.2,89.6 L1003.4,102" stroke="#777" stroke-width="3.6" stroke-linecap="round"/>
<path d="M1004.2,100.6 C998,101 998.4,107.8 989.6,113 C997.6,114.2 1006.6,110.6 1006.4,103 Z" fill="#2f79c1"/>
<polygon points="1010.6,143.2 1016.4,143.2 1013.5,146.2" fill="#555"/>
<polygon points="113.9,202.3 121.2,202.3 117.55000000000001,206" fill="#666"/>
<rect x="147.3" y="198.5" width="2" height="2" fill="#b3b8b0"/>
<rect x="147.3" y="203.4" width="2" height="2" fill="#b3b8b0"/>
<rect x="147.3" y="208.3" width="2" height="2" fill="#b3b8b0"/>
<path d="M181,198.8 L194.8,210.8 M194.8,198.8 L181,210.8" stroke="#b7bdb3" stroke-width="1.6"/>
<path d="M225,206 L230,211 L240.2,199.4" fill="none" stroke="#b7bdb3" stroke-width="1.8"/>
<polygon points="901,528.4 901,532 905.8,532" fill="#5a5a5a"/>
<polygon points="16.6,249.6 31,249.6 31,236.2" fill="#a9b0a5"/>
<polygon points="95.6,263.92 103.0,263.92 99.3,267.92" fill="#595959"/>
<polygon points="152.20000000000002,263.92 159.6,263.92 155.9,267.92" fill="#595959"/>
<polygon points="234.4,263.92 241.79999999999998,263.92 238.1,267.92" fill="#595959"/>
<polygon points="325.2,263.92 332.59999999999997,263.92 328.9,267.92" fill="#595959"/>
<polygon points="392.2,263.92 399.59999999999997,263.92 395.9,267.92" fill="#595959"/>
<polygon points="457.0,263.92 464.4,263.92 460.7,267.92" fill="#595959"/>
<polygon points="496.1,263.92 503.5,263.92 499.8,267.92" fill="#595959"/>
<polygon points="577.5999999999999,263.92 585.0,263.92 581.3,267.92" fill="#595959"/>
<polygon points="621.4,263.92 628.8000000000001,263.92 625.1,267.92" fill="#595959"/>
<polygon points="657.6999999999999,263.92 665.1,263.92 661.4,267.92" fill="#595959"/>
<polygon points="752.2,265.52000000000004 758.0,265.52000000000004 755.1,268.72" fill="#595959"/>
<path d="M762.3000000000001,269.92 V260.92" stroke="#595959" stroke-width="1"/><path d="M760.3000000000001,262.92 L762.3000000000001,260.52000000000004 L764.3000000000001,262.92" fill="none" stroke="#595959" stroke-width="1"/>
<polygon points="832.8,263.92 840.2,263.92 836.5,267.92" fill="#595959"/></svg>
<div class="abs" style="left:0px;top:0px;width:1.30px;height:532.00px;background:#23382c;"></div>
</body></html>
